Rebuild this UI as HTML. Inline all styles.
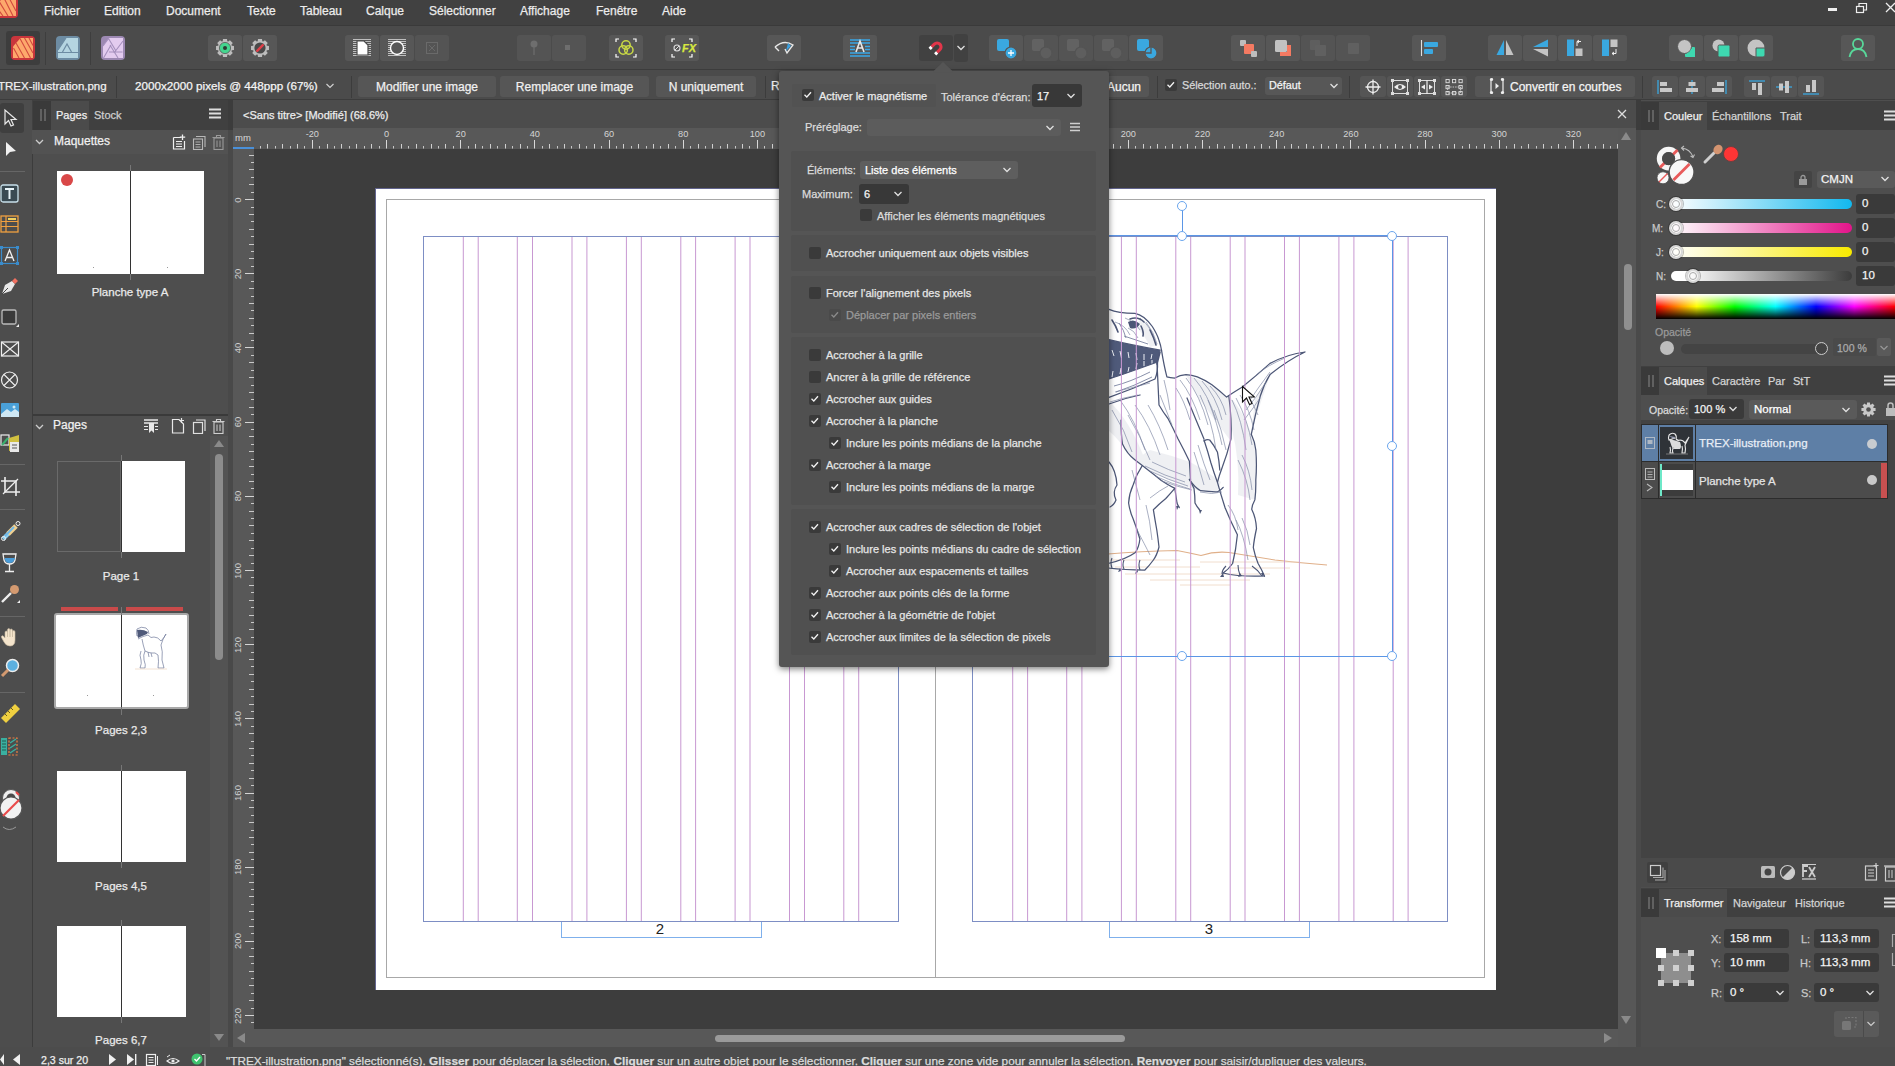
<!DOCTYPE html><html><head><meta charset="utf-8"><style>
html,body{margin:0;padding:0;width:1895px;height:1066px;overflow:hidden;background:#3a3a3a}
body{font-family:"Liberation Sans",sans-serif;position:relative;-webkit-text-stroke:0.25px currentColor}
div{position:absolute;box-sizing:border-box}
svg{position:absolute}
</style></head><body>
<div style="left:0px;top:0px;width:1895px;height:1066px;background:#3a3a3a;"></div>
<div style="left:0px;top:0px;width:1895px;height:25px;background:#414141;"></div>
<svg style="position:absolute;left:0px;top:0px;" width="18" height="18" viewBox="0 0 18 18"><rect x="-8" y="-8" width="26" height="26" rx="4" fill="#c9353c"/><path d="M-6 8L6 -6H16V16H-6Z" fill="#fda86c"/><path d="M2 -6L13 16M7 -6L16 11M-3 -2L8 16M-6 4L3 16" stroke="#d24a3e" stroke-width="1.1"/></svg>
<div style="left:44px;top:-1px;height:24px;line-height:24px;font-size:12px;color:#ececec;white-space:nowrap;">Fichier</div>
<div style="left:104px;top:-1px;height:24px;line-height:24px;font-size:12px;color:#ececec;white-space:nowrap;">Edition</div>
<div style="left:166px;top:-1px;height:24px;line-height:24px;font-size:12px;color:#ececec;white-space:nowrap;">Document</div>
<div style="left:247px;top:-1px;height:24px;line-height:24px;font-size:12px;color:#ececec;white-space:nowrap;">Texte</div>
<div style="left:300px;top:-1px;height:24px;line-height:24px;font-size:12px;color:#ececec;white-space:nowrap;">Tableau</div>
<div style="left:366px;top:-1px;height:24px;line-height:24px;font-size:12px;color:#ececec;white-space:nowrap;">Calque</div>
<div style="left:429px;top:-1px;height:24px;line-height:24px;font-size:12px;color:#ececec;white-space:nowrap;">Sélectionner</div>
<div style="left:520px;top:-1px;height:24px;line-height:24px;font-size:12px;color:#ececec;white-space:nowrap;">Affichage</div>
<div style="left:596px;top:-1px;height:24px;line-height:24px;font-size:12px;color:#ececec;white-space:nowrap;">Fenêtre</div>
<div style="left:662px;top:-1px;height:24px;line-height:24px;font-size:12px;color:#ececec;white-space:nowrap;">Aide</div>
<div style="left:1828px;top:8px;width:9px;height:3px;background:#f0f0f0;"></div>
<svg style="position:absolute;left:1855px;top:2px;" width="14" height="12" viewBox="0 0 14 12"><rect x="1.5" y="4.5" width="7" height="6" fill="none" stroke="#eee" stroke-width="1.2"/><path d="M4 4.5 V1.5 H11.5 V8 H8.5" fill="none" stroke="#eee" stroke-width="1.2"/></svg>
<svg style="position:absolute;left:1884px;top:2px;" width="11" height="11" viewBox="0 0 11 11"><path d="M2 1 L11 10 M11 1 L2 10" stroke="#eee" stroke-width="1.3"/></svg>
<div style="left:0px;top:25px;width:1895px;height:45px;background:#4b4b4b;"></div>
<div style="left:0px;top:25px;width:1895px;height:1px;background:#3a3a3a;"></div>
<div style="left:0px;top:69px;width:1895px;height:1px;background:#3c3c3c;"></div>
<div style="left:0px;top:70px;width:1895px;height:30px;background:#4b4b4b;"></div>
<div style="left:0px;top:99px;width:1895px;height:1px;background:#3c3c3c;"></div>
<div style="left:6px;top:31px;width:34px;height:34px;background:#3d3d3d;border-radius:3px"></div>
<svg style="position:absolute;left:11px;top:36px;" width="24" height="24" viewBox="0 0 24 24"><rect x="0" y="0" width="24" height="24" rx="4" fill="#c9353c"/><path d="M2 10.5L9.5 2H22V22H2Z" fill="#fda86c"/><path d="M9 2.5L19.5 22M13.5 2L22 17M18 2L22 9.5M5 7L13.5 22M2.5 12L8 22" stroke="#d24a3e" stroke-width="1.1"/></svg>
<div style="left:45px;top:32px;width:1px;height:33px;background:#3e3e3e;"></div>
<svg style="position:absolute;left:56px;top:36px;" width="24" height="24" viewBox="0 0 24 24"><rect x="0" y="0" width="24" height="24" rx="4" fill="#6d8ca3"/><path d="M10 2H22V22H2V14Z" fill="#b5d5e1"/><path d="M2 14L10 2M6.5 16L11 8L15.5 16M2 16.5H22" stroke="#6d8ca3" stroke-width="1.2" fill="none"/></svg>
<div style="left:90px;top:32px;width:1px;height:33px;background:#3e3e3e;"></div>
<svg style="position:absolute;left:101px;top:36px;" width="24" height="24" viewBox="0 0 24 24"><rect x="0" y="0" width="24" height="24" rx="4" fill="#9d89b3"/><path d="M8 2H22V22H2V10Z" fill="#e3cbef"/><path d="M2 10L8 2M7.5 2.5L15 15M22 5L13 17M21.5 16H8M17 22L9 9M2.5 22L10 9" stroke="#a590bd" stroke-width="1.1" fill="none"/></svg>
<div style="left:208px;top:35px;width:34px;height:26px;background:#575757;border-radius:3px"></div>
<div style="left:243px;top:35px;width:34px;height:26px;background:#575757;border-radius:3px"></div>
<svg style="position:absolute;left:213px;top:36px;" width="24" height="24" viewBox="0 0 24 24"><path d="M20.98 9.99 L20.98 14.01 L18.83 14.26 L18.43 15.23 L19.77 16.93 L16.93 19.77 L15.23 18.43 L14.26 18.83 L14.01 20.98 L9.99 20.98 L9.74 18.83 L8.77 18.43 L7.07 19.77 L4.23 16.93 L5.57 15.23 L5.17 14.26 L3.02 14.01 L3.02 9.99 L5.17 9.74 L5.57 8.77 L4.23 7.07 L7.07 4.23 L8.77 5.57 L9.74 5.17 L9.99 3.02 L14.01 3.02 L14.26 5.17 L15.23 5.57 L16.93 4.23 L19.77 7.07 L18.43 8.77 L18.83 9.74Z" fill="#bdbdbd"/><circle cx="12" cy="12" r="5.6" fill="#44d58e" stroke="#575757" stroke-width="0.8"/><circle cx="12" cy="12" r="2" fill="#2e3a33"/></svg>
<svg style="position:absolute;left:248px;top:36px;" width="24" height="24" viewBox="0 0 24 24"><path d="M20.98 9.99 L20.98 14.01 L18.83 14.26 L18.43 15.23 L19.77 16.93 L16.93 19.77 L15.23 18.43 L14.26 18.83 L14.01 20.98 L9.99 20.98 L9.74 18.83 L8.77 18.43 L7.07 19.77 L4.23 16.93 L5.57 15.23 L5.17 14.26 L3.02 14.01 L3.02 9.99 L5.17 9.74 L5.57 8.77 L4.23 7.07 L7.07 4.23 L8.77 5.57 L9.74 5.17 L9.99 3.02 L14.01 3.02 L14.26 5.17 L15.23 5.57 L16.93 4.23 L19.77 7.07 L18.43 8.77 L18.83 9.74Z" fill="#bdbdbd"/><circle cx="12" cy="12" r="5.6" fill="#4a4a4a"/><path d="M9.2 14.8L14.8 9.2" stroke="#e0404a" stroke-width="2.4" stroke-linecap="round"/></svg>
<div style="left:345px;top:35px;width:34px;height:26px;background:#575757;border-radius:3px"></div>
<div style="left:380px;top:35px;width:34px;height:26px;background:#575757;border-radius:3px"></div>
<div style="left:415px;top:35px;width:34px;height:26px;background:#545454;border-radius:3px"></div>
<svg style="position:absolute;left:353px;top:39px;" width="18" height="18" viewBox="0 0 18 18"><path d="M0 0.5H18" stroke="#d8d8d8" stroke-width="0.8"/><path d="M0 2.5H18" stroke="#d8d8d8" stroke-width="0.8"/><path d="M0 4.5H18" stroke="#d8d8d8" stroke-width="0.8"/><path d="M0 6.5H18" stroke="#d8d8d8" stroke-width="0.8"/><path d="M0 8.5H18" stroke="#d8d8d8" stroke-width="0.8"/><path d="M0 10.5H18" stroke="#d8d8d8" stroke-width="0.8"/><path d="M0 12.5H18" stroke="#d8d8d8" stroke-width="0.8"/><path d="M0 14.5H18" stroke="#d8d8d8" stroke-width="0.8"/><path d="M0 16.5H18" stroke="#d8d8d8" stroke-width="0.8"/><path d="M4 2H11L15 6V16H4Z" fill="#fff" stroke="#4a4a4a" stroke-width="1.2"/></svg>
<svg style="position:absolute;left:388px;top:39px;" width="18" height="18" viewBox="0 0 18 18"><path d="M0 0.5H18" stroke="#d8d8d8" stroke-width="0.8"/><path d="M0 2.5H18" stroke="#d8d8d8" stroke-width="0.8"/><path d="M0 4.5H18" stroke="#d8d8d8" stroke-width="0.8"/><path d="M0 6.5H18" stroke="#d8d8d8" stroke-width="0.8"/><path d="M0 8.5H18" stroke="#d8d8d8" stroke-width="0.8"/><path d="M0 10.5H18" stroke="#d8d8d8" stroke-width="0.8"/><path d="M0 12.5H18" stroke="#d8d8d8" stroke-width="0.8"/><path d="M0 14.5H18" stroke="#d8d8d8" stroke-width="0.8"/><path d="M0 16.5H18" stroke="#d8d8d8" stroke-width="0.8"/><circle cx="9" cy="9" r="6.5" fill="#575757" stroke="#fff" stroke-width="1.4"/></svg>
<svg style="position:absolute;left:425px;top:41px;" width="14" height="14" viewBox="0 0 14 14"><rect x="1.5" y="1.5" width="11" height="11" fill="none" stroke="#6a6a6a" stroke-width="1"/><path d="M4 4L10 10M10 4L4 10" stroke="#6a6a6a" stroke-width="1"/></svg>
<div style="left:517px;top:35px;width:34px;height:26px;background:#545454;border-radius:3px"></div>
<div style="left:552px;top:35px;width:34px;height:26px;background:#545454;border-radius:3px"></div>
<svg style="position:absolute;left:526px;top:39px;" width="16" height="18" viewBox="0 0 16 18"><circle cx="8" cy="5" r="3.5" fill="#6e6e6e"/><path d="M8 8V16" stroke="#6e6e6e" stroke-width="1.2"/></svg>
<div style="left:565px;top:45px;width:5px;height:5px;background:#6e6e6e;"></div>
<div style="left:609px;top:35px;width:34px;height:26px;background:#575757;border-radius:3px"></div>
<svg style="position:absolute;left:615px;top:38px;" width="22" height="20" viewBox="0 0 22 20"><path d="M1 4V1H4M18 1H21V4M1 16V19H4M18 19H21V16" stroke="#fff" stroke-width="1.2" fill="none"/><circle cx="11" cy="7" r="4.2" fill="none" stroke="#c8d845" stroke-width="1.5"/><circle cx="8.2" cy="12" r="4.2" fill="none" stroke="#c8d845" stroke-width="1.5"/><circle cx="13.8" cy="12" r="4.2" fill="none" stroke="#c8d845" stroke-width="1.5"/></svg>
<div style="left:665px;top:35px;width:34px;height:26px;background:#575757;border-radius:3px"></div>
<svg style="position:absolute;left:671px;top:38px;" width="22" height="20" viewBox="0 0 22 20"><path d="M1 4V1H4M18 1H21V4M1 16V19H4M18 19H21V16" stroke="#fff" stroke-width="1.2" fill="none"/><circle cx="6" cy="10" r="3" fill="none" stroke="#ddd" stroke-width="1.1"/><path d="M4 12L8 8" stroke="#ddd" stroke-width="1"/></svg>
<div style="left:682px;top:41px;font-size:11px;line-height:14px;height:14px;color:#d8e840;font-weight:bold;font-style:italic">FX</div>
<div style="left:767px;top:35px;width:34px;height:26px;background:#575757;border-radius:3px"></div>
<svg style="position:absolute;left:773px;top:38px;" width="22" height="20" viewBox="0 0 22 20"><path d="M2 9 Q11 1 20 7 L14 15 L12 11 M2 9 L6 13" stroke="#e8e8e8" stroke-width="1.4" fill="none"/><path d="M15 5 L13 13 L18 8Z" fill="#3aa0e0"/></svg>
<div style="left:843px;top:35px;width:34px;height:26px;background:#575757;border-radius:3px"></div>
<svg style="position:absolute;left:849px;top:38px;" width="22" height="20" viewBox="0 0 22 20"><path d="M1 2H21M1 5H21M1 15H21M1 18H21M1 8.5H6M16 8.5H21M1 11.5H6M16 11.5H21" stroke="#3aa8e8" stroke-width="1.3"/><path d="M7 14L11 3L15 14M8.5 10H13.5" stroke="#e8e8e8" stroke-width="1.6" fill="none"/></svg>
<div style="left:919px;top:35px;width:34px;height:26px;background:#414141;border-radius:3px"></div>
<div style="left:954px;top:34px;width:14px;height:28px;background:#414141;border-radius:3px"></div>
<svg style="position:absolute;left:926px;top:38px;" width="20" height="20" viewBox="0 0 20 20"><g transform="translate(10 10) scale(0.78) rotate(45) translate(-10 -10)"><path d="M3 13V8A7 7 0 0 1 17 8V13H13V8A3 3 0 0 0 7 8V13Z" fill="#e2364a"/><rect x="3" y="13" width="4" height="3.5" fill="#fff"/><rect x="13" y="13" width="4" height="3.5" fill="#fff"/></g></svg>
<svg style="position:absolute;left:956px;top:44px;" width="10" height="8" viewBox="0 0 10 8"><path d="M1.5 2L5 5.5L8.5 2" stroke="#e0e0e0" stroke-width="1.3" fill="none"/></svg>
<div style="left:989px;top:35px;width:34px;height:26px;background:#575757;border-radius:3px"></div>
<div style="left:1024px;top:35px;width:34px;height:26px;background:#545454;border-radius:3px"></div>
<div style="left:1059px;top:35px;width:34px;height:26px;background:#545454;border-radius:3px"></div>
<div style="left:1094px;top:35px;width:34px;height:26px;background:#545454;border-radius:3px"></div>
<div style="left:1129px;top:35px;width:34px;height:26px;background:#575757;border-radius:3px"></div>
<svg style="position:absolute;left:996px;top:38px;" width="22" height="22" viewBox="0 0 22 22"><rect x="1" y="1" width="12" height="12" rx="2" fill="#3aa8e0"/><circle cx="15" cy="15" r="6" fill="#3aa8e0" stroke="#575757" stroke-width="1.2"/><path d="M15 12V18M12 15H18" stroke="#fff" stroke-width="1.3"/></svg>
<svg style="position:absolute;left:1031px;top:38px;" width="22" height="22" viewBox="0 0 22 22"><rect x="1" y="1" width="12" height="12" rx="2" fill="#626262"/><circle cx="15" cy="15" r="6" fill="#5e5e5e" stroke="#545454" stroke-width="1.2"/></svg>
<svg style="position:absolute;left:1066px;top:38px;" width="22" height="22" viewBox="0 0 22 22"><rect x="1" y="1" width="12" height="12" rx="2" fill="#626262"/><circle cx="15" cy="15" r="6" fill="#5e5e5e" stroke="#545454" stroke-width="1.2"/></svg>
<svg style="position:absolute;left:1101px;top:38px;" width="22" height="22" viewBox="0 0 22 22"><rect x="1" y="1" width="12" height="12" rx="2" fill="#626262"/><circle cx="15" cy="15" r="6" fill="#5e5e5e" stroke="#545454" stroke-width="1.2"/></svg>
<svg style="position:absolute;left:1136px;top:38px;" width="22" height="22" viewBox="0 0 22 22"><rect x="1" y="1" width="12" height="12" rx="2" fill="#3aa8e0"/><circle cx="15" cy="15" r="6" fill="#3aa8e0" stroke="#575757" stroke-width="1.2"/><path d="M15 9V15H9" stroke="#575757" stroke-width="1.3" fill="none"/></svg>
<div style="left:1231px;top:35px;width:34px;height:26px;background:#575757;border-radius:3px"></div>
<div style="left:1266px;top:35px;width:34px;height:26px;background:#575757;border-radius:3px"></div>
<div style="left:1301px;top:35px;width:34px;height:26px;background:#545454;border-radius:3px"></div>
<div style="left:1336px;top:35px;width:34px;height:26px;background:#545454;border-radius:3px"></div>
<svg style="position:absolute;left:1239px;top:39px;" width="20" height="20" viewBox="0 0 20 20"><rect x="1" y="1" width="6" height="6" rx="1" fill="#bdbdbd"/><rect x="5" y="5" width="10" height="10" rx="1" fill="#f47a62"/><rect x="12" y="12" width="6" height="6" rx="1" fill="#bdbdbd"/></svg>
<svg style="position:absolute;left:1274px;top:39px;" width="20" height="20" viewBox="0 0 20 20"><rect x="1" y="1" width="12" height="12" rx="1.5" fill="#c2c2c2"/><path d="M13 6H17V17H6V13H13Z" fill="#f47a62"/></svg>
<svg style="position:absolute;left:1309px;top:39px;" width="20" height="20" viewBox="0 0 20 20"><rect x="1" y="1" width="10" height="10" rx="1" fill="#5e5e5e"/><rect x="6" y="6" width="11" height="11" rx="1" fill="#606060"/></svg>
<svg style="position:absolute;left:1346px;top:41px;" width="16" height="16" viewBox="0 0 16 16"><rect x="2" y="2" width="11" height="11" rx="1" fill="#606060"/></svg>
<div style="left:1412px;top:35px;width:34px;height:26px;background:#575757;border-radius:3px"></div>
<svg style="position:absolute;left:1419px;top:38px;" width="22" height="20" viewBox="0 0 22 20"><path d="M2.5 2V18" stroke="#e0e0e0" stroke-width="1.1"/><rect x="5" y="4" width="14" height="5" rx="1" fill="#3aa8e0"/><rect x="5" y="11" width="9" height="5" rx="1" fill="#3aa8e0"/></svg>
<div style="left:1488px;top:35px;width:34px;height:26px;background:#575757;border-radius:3px"></div>
<div style="left:1523px;top:35px;width:34px;height:26px;background:#575757;border-radius:3px"></div>
<div style="left:1558px;top:35px;width:34px;height:26px;background:#575757;border-radius:3px"></div>
<div style="left:1593px;top:35px;width:34px;height:26px;background:#575757;border-radius:3px"></div>
<svg style="position:absolute;left:1495px;top:38px;" width="20" height="20" viewBox="0 0 20 20"><path d="M9 2L1.5 17H9Z" fill="#3aa8e0"/><path d="M11 2L18.5 17H11Z" fill="#c4c4c4"/></svg>
<svg style="position:absolute;left:1530px;top:38px;" width="20" height="20" viewBox="0 0 20 20"><path d="M18 1.5L3 9H18Z" fill="#3aa8e0"/><path d="M18 11L3 11L18 18.5Z" fill="#c4c4c4"/></svg>
<svg style="position:absolute;left:1565px;top:38px;" width="20" height="20" viewBox="0 0 20 20"><rect x="2" y="1.5" width="7" height="16.5" fill="#3aa8e0"/><rect x="10.5" y="10.5" width="7" height="7.5" fill="#c4c4c4"/><path d="M12 8V3.5H16M14 2L12 3.5L14 5" stroke="#eee" stroke-width="1" fill="none"/></svg>
<svg style="position:absolute;left:1600px;top:38px;" width="20" height="20" viewBox="0 0 20 20"><rect x="2" y="1.5" width="7" height="16.5" fill="#3aa8e0"/><rect x="10.5" y="1.5" width="7" height="7.5" fill="#c4c4c4"/><path d="M16 11V15.5H12M14 14L12 15.5L14 17" stroke="#eee" stroke-width="1" fill="none"/></svg>
<div style="left:1669px;top:35px;width:34px;height:26px;background:#575757;border-radius:3px"></div>
<div style="left:1704px;top:35px;width:34px;height:26px;background:#575757;border-radius:3px"></div>
<div style="left:1739px;top:35px;width:34px;height:26px;background:#575757;border-radius:3px"></div>
<svg style="position:absolute;left:1676px;top:38px;" width="22" height="22" viewBox="0 0 22 22"><rect x="9" y="9" width="10" height="10" rx="1" fill="#3ed8b0"/><circle cx="8.5" cy="8.5" r="7" fill="#c4c4c4" stroke="#575757" stroke-width="1"/><path d="M13 15.5 H19 V9" stroke="#3ed8b0" stroke-width="0" fill="none"/><path d="M15.3 11 A7 7 0 0 1 11 15.3 L11 19 L19 19 L19 11 Z" fill="#3ed8b0"/></svg>
<svg style="position:absolute;left:1711px;top:38px;" width="22" height="22" viewBox="0 0 22 22"><circle cx="7.5" cy="7.5" r="6" fill="#c4c4c4"/><rect x="7" y="7" width="12" height="12" rx="1.5" fill="#3ed8b0" stroke="#575757" stroke-width="1"/></svg>
<svg style="position:absolute;left:1746px;top:38px;" width="22" height="22" viewBox="0 0 22 22"><circle cx="10" cy="10" r="8.5" fill="#c4c4c4"/><path d="M10 19V10H19V17Q19 19 17 19Z" fill="#3ed8b0" stroke="#575757" stroke-width="1"/></svg>
<div style="left:1841px;top:35px;width:34px;height:26px;background:#575757;border-radius:3px"></div>
<svg style="position:absolute;left:1848px;top:37px;" width="20" height="22" viewBox="0 0 20 22"><circle cx="10" cy="7" r="5" fill="none" stroke="#58d89a" stroke-width="1.8"/><path d="M1.5 20 Q3 12 10 12 Q17 12 18.5 20" fill="none" stroke="#58d89a" stroke-width="1.8"/></svg>
<div style="left:-2px;top:74.5px;height:23.0px;line-height:23.0px;font-size:11.5px;color:#f0f0f0;white-space:nowrap;">TREX-illustration.png</div>
<div style="left:116px;top:76px;width:1px;height:22px;background:#3c3c3c;"></div>
<div style="left:135px;top:74.3px;height:23.4px;line-height:23.4px;font-size:11.7px;color:#f4f4f4;white-space:nowrap;">2000x2000 pixels @ 448ppp (67%)</div>
<svg style="position:absolute;left:325px;top:82px;" width="10" height="8" viewBox="0 0 10 8"><path d="M1.5 2L5 5.5L8.5 2" stroke="#d0d0d0" stroke-width="1.2" fill="none"/></svg>
<div style="left:351px;top:76px;width:1px;height:22px;background:#3c3c3c;"></div>
<div style="left:358px;top:76px;width:138px;height:21px;background:#565656;border-radius:3px"></div>
<div style="left:127.0px;width:600px;text-align:center;top:74.5px;height:24px;line-height:24px;font-size:12px;color:#f0f0f0;white-space:nowrap;">Modifier une image</div>
<div style="left:500px;top:76px;width:149px;height:21px;background:#565656;border-radius:3px"></div>
<div style="left:274.5px;width:600px;text-align:center;top:74.5px;height:24px;line-height:24px;font-size:12px;color:#f0f0f0;white-space:nowrap;">Remplacer une image</div>
<div style="left:656px;top:76px;width:100px;height:21px;background:#565656;border-radius:3px"></div>
<div style="left:406.0px;width:600px;text-align:center;top:74.5px;height:24px;line-height:24px;font-size:12px;color:#f0f0f0;white-space:nowrap;">N uniquement</div>
<div style="left:765px;top:76px;width:1px;height:22px;background:#3c3c3c;"></div>
<div style="left:771px;top:74px;height:24px;line-height:24px;font-size:12px;color:#f0f0f0;white-space:nowrap;">R</div>
<div style="left:1095px;top:76px;width:54px;height:21px;background:#565656;border-radius:3px"></div>
<div style="left:1107px;top:74.5px;height:24px;line-height:24px;font-size:12px;color:#f4f4f4;white-space:nowrap;">Aucun</div>
<div style="left:1157px;top:76px;width:1px;height:22px;background:#3c3c3c;"></div>
<div style="left:1165px;top:79px;width:12px;height:12px;background:#3a3a3a;border-radius:2px"></div>
<svg style="position:absolute;left:1165px;top:79px;" width="12" height="12" viewBox="0 0 12 12"><path d="M2.5 5.8L4.8 8L9 3.2" stroke="#f2f2f2" stroke-width="1.3" fill="none"/></svg>
<div style="left:1182px;top:75.2px;height:21.6px;line-height:21.6px;font-size:10.8px;color:#d8d8d8;white-space:nowrap;">Sélection auto.:</div>
<div style="left:1265px;top:77px;width:77px;height:18px;background:#575757;border-radius:3px"></div>
<div style="left:1269px;top:75.2px;height:21.6px;line-height:21.6px;font-size:10.8px;color:#f4f4f4;white-space:nowrap;">Défaut</div>
<svg style="position:absolute;left:1329px;top:82px;" width="10" height="8" viewBox="0 0 10 8"><path d="M1.5 2L5 5.5L8.5 2" stroke="#e0e0e0" stroke-width="1.3" fill="none"/></svg>
<div style="left:1349px;top:76px;width:1px;height:22px;background:#3c3c3c;"></div>
<div style="left:1360px;top:76px;width:26px;height:21px;background:#555;border-radius:3px"></div>
<div style="left:1387px;top:76px;width:26px;height:21px;background:#555;border-radius:3px"></div>
<div style="left:1414px;top:76px;width:26px;height:21px;background:#555;border-radius:3px"></div>
<div style="left:1441px;top:76px;width:26px;height:21px;background:#555;border-radius:3px"></div>
<svg style="position:absolute;left:1363px;top:78px;" width="20" height="18" viewBox="0 0 20 18"><circle cx="10" cy="9" r="5.5" fill="none" stroke="#eee" stroke-width="1.3"/><path d="M10 1.5V16.5M2.5 9H17.5" stroke="#eee" stroke-width="1.3"/></svg>
<svg style="position:absolute;left:1390px;top:78px;" width="20" height="18" viewBox="0 0 20 18"><rect x="2.5" y="2.5" width="15" height="13" fill="none" stroke="#ddd" stroke-width="1"/><path d="M4 9Q10 3 16 9Q10 15 4 9Z" fill="#eee"/><circle cx="10" cy="9" r="2" fill="#555"/><rect x="1.0" y="1.0" width="3" height="3" fill="#ddd"/><rect x="1.0" y="14.0" width="3" height="3" fill="#ddd"/><rect x="16.0" y="1.0" width="3" height="3" fill="#ddd"/><rect x="16.0" y="14.0" width="3" height="3" fill="#ddd"/></svg>
<svg style="position:absolute;left:1417px;top:78px;" width="20" height="18" viewBox="0 0 20 18"><rect x="2.5" y="2.5" width="15" height="13" fill="none" stroke="#ddd" stroke-width="1"/><path d="M10 2V16" stroke="#eee" stroke-width="1.2"/><path d="M4 9L8 6.5V11.5Z M16 9L12 6.5V11.5Z" fill="#eee"/><rect x="1.0" y="1.0" width="3" height="3" fill="#ddd"/><rect x="1.0" y="14.0" width="3" height="3" fill="#ddd"/><rect x="16.0" y="1.0" width="3" height="3" fill="#ddd"/><rect x="16.0" y="14.0" width="3" height="3" fill="#ddd"/></svg>
<svg style="position:absolute;left:1444px;top:78px;" width="20" height="18" viewBox="0 0 20 18"><rect x="2" y="1.5" width="3.2" height="3.2" fill="none" stroke="#ddd" stroke-width="0.9"/><rect x="2" y="7.5" width="3.2" height="3.2" fill="none" stroke="#ddd" stroke-width="0.9"/><rect x="2" y="13.5" width="3.2" height="3.2" fill="none" stroke="#ddd" stroke-width="0.9"/><rect x="8.5" y="1.5" width="3.2" height="3.2" fill="none" stroke="#ddd" stroke-width="0.9"/><rect x="8.5" y="13.5" width="3.2" height="3.2" fill="none" stroke="#ddd" stroke-width="0.9"/><rect x="15" y="1.5" width="3.2" height="3.2" fill="none" stroke="#ddd" stroke-width="0.9"/><rect x="15" y="7.5" width="3.2" height="3.2" fill="none" stroke="#ddd" stroke-width="0.9"/><rect x="15" y="13.5" width="3.2" height="3.2" fill="none" stroke="#ddd" stroke-width="0.9"/><rect x="3.6" y="9" width="13" height="6" fill="none" stroke="#ddd" stroke-width="0.8" stroke-dasharray="1.5 1"/></svg>
<div style="left:1475px;top:76px;width:160px;height:21px;background:#565656;border-radius:3px"></div>
<svg style="position:absolute;left:1489px;top:77px;" width="16" height="18" viewBox="0 0 16 18"><path d="M4 2H2V16H4M12 2H14V16H12" stroke="#eee" stroke-width="1.2" fill="none"/><circle cx="2.5" cy="2.5" r="1.6" fill="#eee"/><circle cx="13.5" cy="2.5" r="1.6" fill="#eee"/><circle cx="2.5" cy="15.5" r="1.6" fill="#eee"/><circle cx="13.5" cy="15.5" r="1.6" fill="#eee"/><path d="M6.5 6L10 9L6.5 12Z" fill="#eee"/></svg>
<div style="left:1510px;top:74.5px;height:24px;line-height:24px;font-size:12px;color:#f4f4f4;white-space:nowrap;">Convertir en courbes</div>
<div style="left:1642px;top:76px;width:1px;height:22px;background:#3c3c3c;"></div>
<div style="left:1652px;top:76px;width:26px;height:21px;background:#555;border-radius:3px"></div>
<div style="left:1679px;top:76px;width:26px;height:21px;background:#555;border-radius:3px"></div>
<div style="left:1706px;top:76px;width:26px;height:21px;background:#555;border-radius:3px"></div>
<div style="left:1744px;top:76px;width:26px;height:21px;background:#555;border-radius:3px"></div>
<div style="left:1771px;top:76px;width:26px;height:21px;background:#555;border-radius:3px"></div>
<div style="left:1798px;top:76px;width:26px;height:21px;background:#555;border-radius:3px"></div>
<svg style="position:absolute;left:1655px;top:78px;" width="20" height="18" viewBox="0 0 20 18"><path d="M3 2V16" stroke="#3aa8e0" stroke-width="1.3"/><rect x="5" y="4" width="7" height="4" fill="#c8c8c8"/><rect x="5" y="10" width="12" height="4" fill="#c8c8c8"/></svg>
<svg style="position:absolute;left:1682px;top:78px;" width="20" height="18" viewBox="0 0 20 18"><path d="M10 2V16" stroke="#3aa8e0" stroke-width="1.3"/><rect x="6.5" y="4" width="7" height="4" fill="#c8c8c8"/><rect x="4" y="10" width="12" height="4" fill="#c8c8c8"/></svg>
<svg style="position:absolute;left:1709px;top:78px;" width="20" height="18" viewBox="0 0 20 18"><path d="M17 2V16" stroke="#3aa8e0" stroke-width="1.3"/><rect x="8" y="4" width="7" height="4" fill="#c8c8c8"/><rect x="3" y="10" width="12" height="4" fill="#c8c8c8"/></svg>
<svg style="position:absolute;left:1747px;top:78px;" width="20" height="18" viewBox="0 0 20 18"><path d="M2 3H18" stroke="#3aa8e0" stroke-width="1.3"/><rect x="5" y="5" width="4" height="7" fill="#c8c8c8"/><rect x="11" y="5" width="4" height="12" fill="#c8c8c8"/></svg>
<svg style="position:absolute;left:1774px;top:78px;" width="20" height="18" viewBox="0 0 20 18"><path d="M2 9H18" stroke="#3aa8e0" stroke-width="1.3"/><rect x="5" y="5.5" width="4" height="7" fill="#c8c8c8"/><rect x="11" y="3" width="4" height="12" fill="#c8c8c8"/></svg>
<svg style="position:absolute;left:1801px;top:78px;" width="20" height="18" viewBox="0 0 20 18"><path d="M2 16H18" stroke="#3aa8e0" stroke-width="1.3"/><rect x="5" y="7" width="4" height="7" fill="#c8c8c8"/><rect x="11" y="2" width="4" height="12" fill="#c8c8c8"/></svg>
<div style="left:0px;top:100px;width:32px;height:947px;background:#4d4d4d;"></div>
<div style="left:32px;top:100px;width:1px;height:947px;background:#3c3c3c;"></div>
<div style="left:0px;top:103px;width:24px;height:30px;background:#3f3f3f;border-radius:3px"></div>
<div style="left:33px;top:100px;width:195px;height:947px;background:#4e4e4e;"></div>
<div style="left:32px;top:100px;width:196px;height:30px;background:#404040;"></div>
<div style="left:51px;top:101px;width:38px;height:29px;background:#4b4b4b;"></div>
<div style="left:33px;top:101px;width:18px;height:29px;background:#3a3a3a;"></div>
<svg style="position:absolute;left:38px;top:108px;" width="10" height="14" viewBox="0 0 10 14"><path d="M3 1V13M7 1V13" stroke="#888" stroke-width="1"/></svg>
<div style="left:56px;top:104px;height:22px;line-height:22px;font-size:11px;color:#f0f0f0;white-space:nowrap;">Pages</div>
<div style="left:94px;top:104px;height:22px;line-height:22px;font-size:11px;color:#cfcfcf;white-space:nowrap;">Stock</div>
<svg style="position:absolute;left:209px;top:108px;" width="12" height="11" viewBox="0 0 12 11"><path d="M0 1.5H12M0 5.5H12M0 9.5H12" stroke="#ddd" stroke-width="2"/></svg>
<div style="left:32px;top:130px;width:196px;height:24px;background:#525252;"></div>
<svg style="position:absolute;left:35px;top:138px;" width="9" height="8" viewBox="0 0 9 8"><path d="M1 2L4.5 5.5L8 2" stroke="#ccc" stroke-width="1.3" fill="none"/></svg>
<div style="left:54px;top:129px;height:24px;line-height:24px;font-size:12px;color:#f0f0f0;white-space:nowrap;">Maquettes</div>
<svg style="position:absolute;left:172px;top:134px;" width="14" height="16" viewBox="0 0 14 16"><path d="M1.5 3.5H9M1.5 3.5V15H12.5V7" stroke="#f0f0f0" stroke-width="1.2" fill="none"/><path d="M4 7.5H10M4 10H10M4 12.5H10" stroke="#f0f0f0" stroke-width="1"/><path d="M10.5 0.5V6M7.8 3.2H13.2" stroke="#f0f0f0" stroke-width="1.3"/></svg>
<svg style="position:absolute;left:192px;top:134px;" width="14" height="16" viewBox="0 0 14 16"><rect x="1.5" y="5" width="9" height="10.5" fill="none" stroke="#b8b8b8" stroke-width="1.1"/><path d="M4 2.5H13V13" stroke="#b8b8b8" stroke-width="1.1" fill="none"/><path d="M3.5 8H8.5M3.5 10.5H8.5M3.5 13H8.5" stroke="#b8b8b8" stroke-width="0.9"/></svg>
<svg style="position:absolute;left:212px;top:134px;" width="13" height="16" viewBox="0 0 13 16"><path d="M0.5 3.5H12.5M4.5 3.5V1.5H8.5V3.5" stroke="#9a9a9a" stroke-width="1.1" fill="none"/><rect x="2" y="4" width="9" height="11.5" fill="none" stroke="#9a9a9a" stroke-width="1.1"/><path d="M5 6.5V13M8 6.5V13" stroke="#9a9a9a" stroke-width="1"/></svg>
<div style="left:57px;top:171px;width:147px;height:103px;background:#fff;"></div>
<div style="left:130px;top:165px;width:1px;height:115px;background:#777;"></div>
<div style="left:130px;top:171px;width:1px;height:103px;background:#333;"></div>
<div style="left:61px;top:174px;width:12px;height:12px;border-radius:50%;background:#d94848"></div>
<div style="left:-170px;width:600px;text-align:center;top:280.5px;height:23.0px;line-height:23.0px;font-size:11.5px;color:#eaeaea;white-space:nowrap;">Planche type A</div>
<div style="left:93px;top:267px;width:1px;height:1px;background:#999;"></div>
<div style="left:167px;top:267px;width:1px;height:1px;background:#999;"></div>
<div style="left:33px;top:414px;width:195px;height:2px;background:#3a3a3a;"></div>
<svg style="position:absolute;left:35px;top:423px;" width="9" height="8" viewBox="0 0 9 8"><path d="M1 2L4.5 5.5L8 2" stroke="#ccc" stroke-width="1.3" fill="none"/></svg>
<div style="left:53px;top:413px;height:24px;line-height:24px;font-size:12px;color:#f0f0f0;white-space:nowrap;">Pages</div>
<svg style="position:absolute;left:143px;top:418px;" width="16" height="16" viewBox="0 0 16 16"><path d="M1 2H15M1 5H15" stroke="#e8e8e8" stroke-width="1.4"/><path d="M6 5V15L8.5 12.5L11 15V5" fill="#e8e8e8"/><path d="M1 8.5H5M1 11.5H5M12 8.5H15M12 11.5H15" stroke="#e8e8e8" stroke-width="1.2"/></svg>
<svg style="position:absolute;left:171px;top:418px;" width="14" height="16" viewBox="0 0 14 16"><path d="M1.5 1.5H8L12.5 6V15H1.5Z" fill="none" stroke="#e8e8e8" stroke-width="1.2"/><path d="M10.5 0V5M8 2.5H13" stroke="#e8e8e8" stroke-width="1.2"/></svg>
<svg style="position:absolute;left:192px;top:418px;" width="14" height="16" viewBox="0 0 14 16"><rect x="1.5" y="4.5" width="9" height="11" fill="none" stroke="#e0e0e0" stroke-width="1.2"/><path d="M4 2H13V13" stroke="#e0e0e0" stroke-width="1.2" fill="none"/></svg>
<svg style="position:absolute;left:212px;top:418px;" width="13" height="16" viewBox="0 0 13 16"><path d="M0.5 3.5H12.5M4.5 3.5V1.5H8.5V3.5" stroke="#cfcfcf" stroke-width="1.1" fill="none"/><rect x="2" y="4" width="9" height="11.5" fill="none" stroke="#cfcfcf" stroke-width="1.1"/><path d="M5 6.5V13M8 6.5V13" stroke="#cfcfcf" stroke-width="1"/></svg>
<div style="left:210px;top:436px;width:18px;height:611px;background:#535353;"></div>
<div style="left:215px;top:454px;width:8px;height:206px;background:#8c8c8c;border-radius:4px"></div>
<svg style="position:absolute;left:213px;top:439px;" width="12" height="9" viewBox="0 0 12 9"><path d="M1 8L6 1L11 8Z" fill="#8a8a8a"/></svg>
<svg style="position:absolute;left:213px;top:1033px;" width="12" height="9" viewBox="0 0 12 9"><path d="M1 1L6 8L11 1Z" fill="#8a8a8a"/></svg>
<div style="left:57px;top:461px;width:64px;height:91px;background:transparent;border:1px solid #6a6a6a"></div>
<div style="left:121px;top:461px;width:64px;height:91px;background:#fff;"></div>
<div style="left:121px;top:455px;width:1px;height:103px;background:#777;"></div>
<div style="left:121px;top:461px;width:1px;height:91px;background:#333;"></div>
<div style="left:-179px;width:600px;text-align:center;top:564.5px;height:23.0px;line-height:23.0px;font-size:11.5px;color:#eaeaea;white-space:nowrap;">Page 1</div>
<div style="left:61px;top:607px;width:57px;height:4px;background:#c94a4a;"></div>
<div style="left:126px;top:607px;width:57px;height:4px;background:#c94a4a;"></div>
<div style="left:54px;top:613px;width:135px;height:96px;background:#fff;border:2px solid #a8a8a8;border-radius:3px"></div>
<div style="left:121px;top:607px;width:1px;height:108px;background:#777;"></div>
<div style="left:121px;top:615px;width:1px;height:92px;background:#333;"></div>
<div style="left:-179px;width:600px;text-align:center;top:718.5px;height:23.0px;line-height:23.0px;font-size:11.5px;color:#eaeaea;white-space:nowrap;">Pages 2,3</div>
<svg style="position:absolute;left:121px;top:615px;" width="65" height="91" viewBox="0 0 65 91"><g fill="none" stroke="#6f789a" stroke-width="0.7"><path d="M16 14 Q20 11 25 13 Q28 15 28 19 M16 14 Q15 18 16 21 Q20 20 24 18 M17 24 Q22 21 27 20"/><path d="M27 20 Q30 24 33 22 Q37 22 40 26 Q43 23 45 19 Q42 23 40 30 Q42 36 41 45 Q42 49 43 53 L37 53 Q38 46 37 40 Q34 37 31 38"/><path d="M21 24 Q22 30 24 36 Q22 40 23 45 Q25 50 24 53 L19 53 Q21 48 20 45 Q18 40 20 36 M24 36 Q28 38 31 38 M27 37 L28 42 M30 38 L31 42"/></g><path d="M16 15 Q22 14 27 17 L26 19 Q21 21 17 23 Z" fill="#4f5a7a"/><path d="M14 54 H46" stroke="#efd9c6" stroke-width="0.8"/></svg>
<div style="left:87px;top:695px;width:1px;height:1px;background:#999;"></div>
<div style="left:153px;top:695px;width:1px;height:1px;background:#999;"></div>
<div style="left:57px;top:771px;width:129px;height:91px;background:#fff;"></div>
<div style="left:121px;top:765px;width:1px;height:103px;background:#777;"></div>
<div style="left:121px;top:771px;width:1px;height:91px;background:#333;"></div>
<div style="left:-179px;width:600px;text-align:center;top:874.5px;height:23.0px;line-height:23.0px;font-size:11.5px;color:#eaeaea;white-space:nowrap;">Pages 4,5</div>
<div style="left:57px;top:926px;width:129px;height:91px;background:#fff;"></div>
<div style="left:121px;top:920px;width:1px;height:103px;background:#777;"></div>
<div style="left:121px;top:926px;width:1px;height:91px;background:#333;"></div>
<div style="left:-179px;width:600px;text-align:center;top:1028.5px;height:23.0px;line-height:23.0px;font-size:11.5px;color:#eaeaea;white-space:nowrap;">Pages 6,7</div>
<div style="left:228px;top:130px;width:5px;height:917px;background:#494949;"></div>
<div style="left:228px;top:100px;width:5px;height:30px;background:#3c3c3c;"></div>
<svg style="position:absolute;left:2px;top:108px;" width="18" height="20" viewBox="0 0 18 20"><path d="M3 2L3 16L6.5 12.5L9 18L11.5 17L9 11.5L14 11.5Z" fill="#3f3f3f" stroke="#e8e8e8" stroke-width="1.2"/></svg>
<svg style="position:absolute;left:2px;top:140px;" width="18" height="18" viewBox="0 0 18 18"><path d="M4 2L4 16L8 12L14 11Z" fill="#f0f0f0"/></svg>
<div style="left:0px;top:171px;width:25px;height:1px;background:#666;"></div>
<svg style="position:absolute;left:0px;top:184px;" width="20" height="20" viewBox="0 0 20 20"><rect x="1" y="1" width="17" height="17" rx="2" fill="#3a4a52" stroke="#c8e0ea" stroke-width="1.3"/><path d="M5 5H14M9.5 5V15" stroke="#e8f4f8" stroke-width="2"/></svg>
<svg style="position:absolute;left:0px;top:214px;" width="20" height="20" viewBox="0 0 20 20"><rect x="1" y="2" width="17" height="16" fill="none" stroke="#f0a040" stroke-width="1.3"/><path d="M1 7.5H18M1 12.5H18M6 2V18" stroke="#f0a040" stroke-width="1.2"/><rect x="8" y="4" width="8" height="2" fill="#f0d060"/></svg>
<svg style="position:absolute;left:0px;top:246px;" width="20" height="20" viewBox="0 0 20 20"><rect x="1.5" y="1.5" width="16" height="16" fill="none" stroke="#3a8ccc" stroke-width="1.2"/><path d="M5 15L9.5 4L14 15M6.5 11.5H12.5" stroke="#f0f0f0" stroke-width="1.3" fill="none"/><rect x="0.0" y="0.0" width="3" height="3" fill="#3a8ccc"/><rect x="0.0" y="16.0" width="3" height="3" fill="#3a8ccc"/><rect x="16.0" y="0.0" width="3" height="3" fill="#3a8ccc"/><rect x="16.0" y="16.0" width="3" height="3" fill="#3a8ccc"/></svg>
<svg style="position:absolute;left:0px;top:276px;" width="20" height="20" viewBox="0 0 20 20"><path d="M2 18L5 9L12 5L15 8L11 15Z" fill="#e8e8e8"/><path d="M2 18L8 12" stroke="#444" stroke-width="1"/><path d="M12 5L15 2L18 5L15 8Z" fill="#f07060"/></svg>
<svg style="position:absolute;left:0px;top:308px;" width="20" height="20" viewBox="0 0 20 20"><rect x="2" y="2" width="14" height="14" rx="1.5" fill="#3a3a3a" stroke="#bbb" stroke-width="1.3"/><path d="M19 16V19H16Z" fill="#eee"/></svg>
<svg style="position:absolute;left:0px;top:340px;" width="20" height="18" viewBox="0 0 20 18"><rect x="1.5" y="2" width="17" height="14" fill="none" stroke="#eee" stroke-width="1.2"/><path d="M1.5 2L18.5 16M18.5 2L1.5 16" stroke="#eee" stroke-width="1.1"/></svg>
<svg style="position:absolute;left:0px;top:370px;" width="20" height="20" viewBox="0 0 20 20"><circle cx="9.5" cy="10" r="8" fill="none" stroke="#eee" stroke-width="1.2"/><path d="M4 4.5L15 15.5M15 4.5L4 15.5" stroke="#eee" stroke-width="1.1"/></svg>
<svg style="position:absolute;left:0px;top:402px;" width="20" height="16" viewBox="0 0 20 16"><rect x="1" y="1" width="18" height="14" rx="1" fill="#4aa0d8"/><path d="M1 12L7 7L11 10L15 7L19 10V15H1Z" fill="#cfe8f4"/><circle cx="14" cy="5" r="1.5" fill="#cfe8f4"/></svg>
<svg style="position:absolute;left:0px;top:433px;" width="22" height="20" viewBox="0 0 22 20"><rect x="1" y="2" width="8" height="10" fill="none" stroke="#eee" stroke-width="1.2"/><path d="M9 5L19 2V16L9 18Z" fill="#d0c040"/><rect x="10" y="9" width="9" height="10" fill="#e8e8e8"/><path d="M2 12L8 5" stroke="#3ab070" stroke-width="2"/><path d="M12 12H17M12 15H17" stroke="#555" stroke-width="1"/></svg>
<div style="left:0px;top:464px;width:25px;height:1px;background:#666;"></div>
<svg style="position:absolute;left:0px;top:476px;" width="22" height="22" viewBox="0 0 22 22"><path d="M5 1V16H20M1 5H16V20" stroke="#eee" stroke-width="1.6" fill="none"/><path d="M3 18L18 3" stroke="#eee" stroke-width="1.2"/></svg>
<div style="left:0px;top:509px;width:25px;height:1px;background:#666;"></div>
<svg style="position:absolute;left:0px;top:520px;" width="22" height="22" viewBox="0 0 22 22"><path d="M3 19L9 13" stroke="#8fd0f0" stroke-width="4"/><path d="M8 14L16 6" stroke="#f0d090" stroke-width="5"/><path d="M5 16L14 7" stroke="#6fb8e8" stroke-width="2"/><circle cx="18" cy="3.5" r="2" fill="none" stroke="#eee" stroke-width="1"/><circle cx="3.5" cy="18.5" r="2" fill="none" stroke="#eee" stroke-width="1"/></svg>
<svg style="position:absolute;left:0px;top:552px;" width="20" height="22" viewBox="0 0 20 22"><path d="M3 2H16L15 8Q14 12 9.5 12Q5 12 4 8Z" fill="none" stroke="#eee" stroke-width="1.3"/><path d="M4.5 6H15Q14 11 9.5 11Q5 11 4.5 6Z" fill="#4a9cd8"/><path d="M9.5 12V19M5 19.5H14" stroke="#eee" stroke-width="1.3"/></svg>
<svg style="position:absolute;left:0px;top:583px;" width="22" height="22" viewBox="0 0 22 22"><path d="M2 19L11 10" stroke="#eee" stroke-width="2.4"/><circle cx="14.5" cy="6.5" r="4.5" fill="#d49a70"/><path d="M20 17V20H17Z" fill="#eee"/></svg>
<div style="left:0px;top:616px;width:25px;height:1px;background:#666;"></div>
<svg style="position:absolute;left:0px;top:627px;" width="22" height="22" viewBox="0 0 22 22"><path d="M5 11V5.5Q5 4 6.3 4Q7.5 4 7.5 5.5V10V3Q7.5 1.5 8.8 1.5Q10 1.5 10 3V10V3.5Q10 2 11.3 2Q12.5 2 12.5 3.5V10V5Q12.5 3.5 13.8 3.5Q15 3.5 15 5V13Q15 19 10 19Q6 19 4 15L1.5 10.5Q1 9 2.3 8.7Q3.3 8.5 4 10Z" fill="#f4e4cc" stroke="#c8b8a0" stroke-width="0.6"/></svg>
<svg style="position:absolute;left:0px;top:657px;" width="22" height="22" viewBox="0 0 22 22"><circle cx="12.5" cy="8.5" r="6" fill="#5cb0e0" stroke="#eee" stroke-width="1.5"/><path d="M8 13L2 19" stroke="#d49a70" stroke-width="3"/></svg>
<div style="left:0px;top:692px;width:25px;height:1px;background:#666;"></div>
<svg style="position:absolute;left:0px;top:703px;" width="22" height="22" viewBox="0 0 22 22"><path d="M1 15L15 1L20 6L6 20Z" fill="#f0d040"/><path d="M5 11L7 13M8 8L10 10M11 5L13 7" stroke="#6a5a20" stroke-width="1"/></svg>
<svg style="position:absolute;left:0px;top:735px;" width="22" height="22" viewBox="0 0 22 22"><rect x="1" y="3" width="6" height="17" fill="#3ab0a0"/><rect x="9" y="3" width="8" height="17" fill="none" stroke="#f08040" stroke-width="1.2" stroke-dasharray="2 1.5"/><path d="M2 6H6M2 9H6M2 12H6M2 15H6" stroke="#1e5a50" stroke-width="1"/><path d="M10 8L16 4M10 13L16 9M10 18L16 14" stroke="#3ab0a0" stroke-width="1.5"/></svg>
<svg style="position:absolute;left:0px;top:786px;" width="26" height="50" viewBox="0 0 26 50"><circle cx="11" cy="12" r="8.5" fill="#eee" stroke="#555" stroke-width="1"/><circle cx="11" cy="12" r="4.5" fill="#4a4a4a"/><path d="M16 6L19 9" stroke="#e84a4a" stroke-width="2"/>
      <circle cx="11" cy="22" r="11" fill="#f2f2f2" stroke="#555" stroke-width="1.2"/><path d="M3 30L19 14" stroke="#e84a4a" stroke-width="2.2"/>
      <path d="M3 41 Q9 46 16 41" stroke="#999" stroke-width="1" fill="none"/></svg>
<div style="left:233px;top:100px;width:1403px;height:28px;background:#4c4c4c;"></div>
<div style="left:243px;top:104px;height:22px;line-height:22px;font-size:11px;color:#ececec;white-space:nowrap;">&lt;Sans titre&gt; [Modifié] (68.6%)</div>
<svg style="position:absolute;left:1617px;top:109px;" width="10" height="10" viewBox="0 0 10 10"><path d="M1 1L9 9M9 1L1 9" stroke="#ddd" stroke-width="1.3"/></svg>
<div style="left:233px;top:128px;width:1385px;height:21px;background:#585858;"></div>
<div style="left:233px;top:128px;width:21px;height:901px;background:#585858;"></div>
<div style="left:233px;top:147px;width:21px;height:2px;background:#4a90d9;"></div>
<div style="left:235px;top:127.5px;height:19.0px;line-height:19.0px;font-size:9.5px;color:#d8d8d8;white-space:nowrap;-webkit-text-stroke:0">mm</div>
<div style="left:254px;top:149px;width:1364px;height:880px;background:#3d3d3d;"></div>
<svg style="position:absolute;left:253px;top:128px;" width="1365" height="21" viewBox="0 0 1365 21"><rect x="-1" y="16" width="1" height="4.5" fill="#d0d0d0"/><rect x="7" y="18" width="1" height="2.5" fill="#c8c8c8"/><rect x="14" y="16" width="1" height="4.5" fill="#d0d0d0"/><rect x="22" y="18" width="1" height="2.5" fill="#c8c8c8"/><rect x="29" y="16" width="1" height="4.5" fill="#d0d0d0"/><rect x="37" y="18" width="1" height="2.5" fill="#c8c8c8"/><rect x="44" y="16" width="1" height="4.5" fill="#d0d0d0"/><rect x="51" y="18" width="1" height="2.5" fill="#c8c8c8"/><rect x="59" y="12" width="1" height="8.5" fill="#d8d8d8"/><rect x="66" y="18" width="1" height="2.5" fill="#c8c8c8"/><rect x="74" y="16" width="1" height="4.5" fill="#d0d0d0"/><rect x="81" y="18" width="1" height="2.5" fill="#c8c8c8"/><rect x="88" y="16" width="1" height="4.5" fill="#d0d0d0"/><rect x="96" y="18" width="1" height="2.5" fill="#c8c8c8"/><rect x="103" y="16" width="1" height="4.5" fill="#d0d0d0"/><rect x="111" y="18" width="1" height="2.5" fill="#c8c8c8"/><rect x="118" y="16" width="1" height="4.5" fill="#d0d0d0"/><rect x="126" y="18" width="1" height="2.5" fill="#c8c8c8"/><rect x="133" y="12" width="1" height="8.5" fill="#d8d8d8"/><rect x="140" y="18" width="1" height="2.5" fill="#c8c8c8"/><rect x="148" y="16" width="1" height="4.5" fill="#d0d0d0"/><rect x="155" y="18" width="1" height="2.5" fill="#c8c8c8"/><rect x="163" y="16" width="1" height="4.5" fill="#d0d0d0"/><rect x="170" y="18" width="1" height="2.5" fill="#c8c8c8"/><rect x="178" y="16" width="1" height="4.5" fill="#d0d0d0"/><rect x="185" y="18" width="1" height="2.5" fill="#c8c8c8"/><rect x="192" y="16" width="1" height="4.5" fill="#d0d0d0"/><rect x="200" y="18" width="1" height="2.5" fill="#c8c8c8"/><rect x="207" y="12" width="1" height="8.5" fill="#d8d8d8"/><rect x="215" y="18" width="1" height="2.5" fill="#c8c8c8"/><rect x="222" y="16" width="1" height="4.5" fill="#d0d0d0"/><rect x="229" y="18" width="1" height="2.5" fill="#c8c8c8"/><rect x="237" y="16" width="1" height="4.5" fill="#d0d0d0"/><rect x="244" y="18" width="1" height="2.5" fill="#c8c8c8"/><rect x="252" y="16" width="1" height="4.5" fill="#d0d0d0"/><rect x="259" y="18" width="1" height="2.5" fill="#c8c8c8"/><rect x="267" y="16" width="1" height="4.5" fill="#d0d0d0"/><rect x="274" y="18" width="1" height="2.5" fill="#c8c8c8"/><rect x="281" y="12" width="1" height="8.5" fill="#d8d8d8"/><rect x="289" y="18" width="1" height="2.5" fill="#c8c8c8"/><rect x="296" y="16" width="1" height="4.5" fill="#d0d0d0"/><rect x="304" y="18" width="1" height="2.5" fill="#c8c8c8"/><rect x="311" y="16" width="1" height="4.5" fill="#d0d0d0"/><rect x="318" y="18" width="1" height="2.5" fill="#c8c8c8"/><rect x="326" y="16" width="1" height="4.5" fill="#d0d0d0"/><rect x="333" y="18" width="1" height="2.5" fill="#c8c8c8"/><rect x="341" y="16" width="1" height="4.5" fill="#d0d0d0"/><rect x="348" y="18" width="1" height="2.5" fill="#c8c8c8"/><rect x="356" y="12" width="1" height="8.5" fill="#d8d8d8"/><rect x="363" y="18" width="1" height="2.5" fill="#c8c8c8"/><rect x="370" y="16" width="1" height="4.5" fill="#d0d0d0"/><rect x="378" y="18" width="1" height="2.5" fill="#c8c8c8"/><rect x="385" y="16" width="1" height="4.5" fill="#d0d0d0"/><rect x="393" y="18" width="1" height="2.5" fill="#c8c8c8"/><rect x="400" y="16" width="1" height="4.5" fill="#d0d0d0"/><rect x="407" y="18" width="1" height="2.5" fill="#c8c8c8"/><rect x="415" y="16" width="1" height="4.5" fill="#d0d0d0"/><rect x="422" y="18" width="1" height="2.5" fill="#c8c8c8"/><rect x="430" y="12" width="1" height="8.5" fill="#d8d8d8"/><rect x="437" y="18" width="1" height="2.5" fill="#c8c8c8"/><rect x="445" y="16" width="1" height="4.5" fill="#d0d0d0"/><rect x="452" y="18" width="1" height="2.5" fill="#c8c8c8"/><rect x="459" y="16" width="1" height="4.5" fill="#d0d0d0"/><rect x="467" y="18" width="1" height="2.5" fill="#c8c8c8"/><rect x="474" y="16" width="1" height="4.5" fill="#d0d0d0"/><rect x="482" y="18" width="1" height="2.5" fill="#c8c8c8"/><rect x="489" y="16" width="1" height="4.5" fill="#d0d0d0"/><rect x="496" y="18" width="1" height="2.5" fill="#c8c8c8"/><rect x="504" y="12" width="1" height="8.5" fill="#d8d8d8"/><rect x="511" y="18" width="1" height="2.5" fill="#c8c8c8"/><rect x="519" y="16" width="1" height="4.5" fill="#d0d0d0"/><rect x="526" y="18" width="1" height="2.5" fill="#c8c8c8"/><rect x="534" y="16" width="1" height="4.5" fill="#d0d0d0"/><rect x="541" y="18" width="1" height="2.5" fill="#c8c8c8"/><rect x="548" y="16" width="1" height="4.5" fill="#d0d0d0"/><rect x="556" y="18" width="1" height="2.5" fill="#c8c8c8"/><rect x="563" y="16" width="1" height="4.5" fill="#d0d0d0"/><rect x="571" y="18" width="1" height="2.5" fill="#c8c8c8"/><rect x="578" y="12" width="1" height="8.5" fill="#d8d8d8"/><rect x="585" y="18" width="1" height="2.5" fill="#c8c8c8"/><rect x="593" y="16" width="1" height="4.5" fill="#d0d0d0"/><rect x="600" y="18" width="1" height="2.5" fill="#c8c8c8"/><rect x="608" y="16" width="1" height="4.5" fill="#d0d0d0"/><rect x="615" y="18" width="1" height="2.5" fill="#c8c8c8"/><rect x="623" y="16" width="1" height="4.5" fill="#d0d0d0"/><rect x="630" y="18" width="1" height="2.5" fill="#c8c8c8"/><rect x="637" y="16" width="1" height="4.5" fill="#d0d0d0"/><rect x="645" y="18" width="1" height="2.5" fill="#c8c8c8"/><rect x="652" y="12" width="1" height="8.5" fill="#d8d8d8"/><rect x="660" y="18" width="1" height="2.5" fill="#c8c8c8"/><rect x="667" y="16" width="1" height="4.5" fill="#d0d0d0"/><rect x="675" y="18" width="1" height="2.5" fill="#c8c8c8"/><rect x="682" y="16" width="1" height="4.5" fill="#d0d0d0"/><rect x="689" y="18" width="1" height="2.5" fill="#c8c8c8"/><rect x="697" y="16" width="1" height="4.5" fill="#d0d0d0"/><rect x="704" y="18" width="1" height="2.5" fill="#c8c8c8"/><rect x="712" y="16" width="1" height="4.5" fill="#d0d0d0"/><rect x="719" y="18" width="1" height="2.5" fill="#c8c8c8"/><rect x="726" y="12" width="1" height="8.5" fill="#d8d8d8"/><rect x="734" y="18" width="1" height="2.5" fill="#c8c8c8"/><rect x="741" y="16" width="1" height="4.5" fill="#d0d0d0"/><rect x="749" y="18" width="1" height="2.5" fill="#c8c8c8"/><rect x="756" y="16" width="1" height="4.5" fill="#d0d0d0"/><rect x="764" y="18" width="1" height="2.5" fill="#c8c8c8"/><rect x="771" y="16" width="1" height="4.5" fill="#d0d0d0"/><rect x="778" y="18" width="1" height="2.5" fill="#c8c8c8"/><rect x="786" y="16" width="1" height="4.5" fill="#d0d0d0"/><rect x="793" y="18" width="1" height="2.5" fill="#c8c8c8"/><rect x="801" y="12" width="1" height="8.5" fill="#d8d8d8"/><rect x="808" y="18" width="1" height="2.5" fill="#c8c8c8"/><rect x="815" y="16" width="1" height="4.5" fill="#d0d0d0"/><rect x="823" y="18" width="1" height="2.5" fill="#c8c8c8"/><rect x="830" y="16" width="1" height="4.5" fill="#d0d0d0"/><rect x="838" y="18" width="1" height="2.5" fill="#c8c8c8"/><rect x="845" y="16" width="1" height="4.5" fill="#d0d0d0"/><rect x="853" y="18" width="1" height="2.5" fill="#c8c8c8"/><rect x="860" y="16" width="1" height="4.5" fill="#d0d0d0"/><rect x="867" y="18" width="1" height="2.5" fill="#c8c8c8"/><rect x="875" y="12" width="1" height="8.5" fill="#d8d8d8"/><rect x="882" y="18" width="1" height="2.5" fill="#c8c8c8"/><rect x="890" y="16" width="1" height="4.5" fill="#d0d0d0"/><rect x="897" y="18" width="1" height="2.5" fill="#c8c8c8"/><rect x="904" y="16" width="1" height="4.5" fill="#d0d0d0"/><rect x="912" y="18" width="1" height="2.5" fill="#c8c8c8"/><rect x="919" y="16" width="1" height="4.5" fill="#d0d0d0"/><rect x="927" y="18" width="1" height="2.5" fill="#c8c8c8"/><rect x="934" y="16" width="1" height="4.5" fill="#d0d0d0"/><rect x="942" y="18" width="1" height="2.5" fill="#c8c8c8"/><rect x="949" y="12" width="1" height="8.5" fill="#d8d8d8"/><rect x="956" y="18" width="1" height="2.5" fill="#c8c8c8"/><rect x="964" y="16" width="1" height="4.5" fill="#d0d0d0"/><rect x="971" y="18" width="1" height="2.5" fill="#c8c8c8"/><rect x="979" y="16" width="1" height="4.5" fill="#d0d0d0"/><rect x="986" y="18" width="1" height="2.5" fill="#c8c8c8"/><rect x="993" y="16" width="1" height="4.5" fill="#d0d0d0"/><rect x="1001" y="18" width="1" height="2.5" fill="#c8c8c8"/><rect x="1008" y="16" width="1" height="4.5" fill="#d0d0d0"/><rect x="1016" y="18" width="1" height="2.5" fill="#c8c8c8"/><rect x="1023" y="12" width="1" height="8.5" fill="#d8d8d8"/><rect x="1031" y="18" width="1" height="2.5" fill="#c8c8c8"/><rect x="1038" y="16" width="1" height="4.5" fill="#d0d0d0"/><rect x="1045" y="18" width="1" height="2.5" fill="#c8c8c8"/><rect x="1053" y="16" width="1" height="4.5" fill="#d0d0d0"/><rect x="1060" y="18" width="1" height="2.5" fill="#c8c8c8"/><rect x="1068" y="16" width="1" height="4.5" fill="#d0d0d0"/><rect x="1075" y="18" width="1" height="2.5" fill="#c8c8c8"/><rect x="1083" y="16" width="1" height="4.5" fill="#d0d0d0"/><rect x="1090" y="18" width="1" height="2.5" fill="#c8c8c8"/><rect x="1097" y="12" width="1" height="8.5" fill="#d8d8d8"/><rect x="1105" y="18" width="1" height="2.5" fill="#c8c8c8"/><rect x="1112" y="16" width="1" height="4.5" fill="#d0d0d0"/><rect x="1120" y="18" width="1" height="2.5" fill="#c8c8c8"/><rect x="1127" y="16" width="1" height="4.5" fill="#d0d0d0"/><rect x="1134" y="18" width="1" height="2.5" fill="#c8c8c8"/><rect x="1142" y="16" width="1" height="4.5" fill="#d0d0d0"/><rect x="1149" y="18" width="1" height="2.5" fill="#c8c8c8"/><rect x="1157" y="16" width="1" height="4.5" fill="#d0d0d0"/><rect x="1164" y="18" width="1" height="2.5" fill="#c8c8c8"/><rect x="1172" y="12" width="1" height="8.5" fill="#d8d8d8"/><rect x="1179" y="18" width="1" height="2.5" fill="#c8c8c8"/><rect x="1186" y="16" width="1" height="4.5" fill="#d0d0d0"/><rect x="1194" y="18" width="1" height="2.5" fill="#c8c8c8"/><rect x="1201" y="16" width="1" height="4.5" fill="#d0d0d0"/><rect x="1209" y="18" width="1" height="2.5" fill="#c8c8c8"/><rect x="1216" y="16" width="1" height="4.5" fill="#d0d0d0"/><rect x="1223" y="18" width="1" height="2.5" fill="#c8c8c8"/><rect x="1231" y="16" width="1" height="4.5" fill="#d0d0d0"/><rect x="1238" y="18" width="1" height="2.5" fill="#c8c8c8"/><rect x="1246" y="12" width="1" height="8.5" fill="#d8d8d8"/><rect x="1253" y="18" width="1" height="2.5" fill="#c8c8c8"/><rect x="1261" y="16" width="1" height="4.5" fill="#d0d0d0"/><rect x="1268" y="18" width="1" height="2.5" fill="#c8c8c8"/><rect x="1275" y="16" width="1" height="4.5" fill="#d0d0d0"/><rect x="1283" y="18" width="1" height="2.5" fill="#c8c8c8"/><rect x="1290" y="16" width="1" height="4.5" fill="#d0d0d0"/><rect x="1298" y="18" width="1" height="2.5" fill="#c8c8c8"/><rect x="1305" y="16" width="1" height="4.5" fill="#d0d0d0"/><rect x="1312" y="18" width="1" height="2.5" fill="#c8c8c8"/><rect x="1320" y="12" width="1" height="8.5" fill="#d8d8d8"/><rect x="1327" y="18" width="1" height="2.5" fill="#c8c8c8"/><rect x="1335" y="16" width="1" height="4.5" fill="#d0d0d0"/><rect x="1342" y="18" width="1" height="2.5" fill="#c8c8c8"/><rect x="1350" y="16" width="1" height="4.5" fill="#d0d0d0"/><rect x="1357" y="18" width="1" height="2.5" fill="#c8c8c8"/><rect x="1364" y="16" width="1" height="4.5" fill="#d0d0d0"/></svg>
<div style="left:12.319999999999993px;width:600px;text-align:center;top:124.8px;height:18.4px;line-height:18.4px;font-size:9.2px;color:#d4d4d4;white-space:nowrap;-webkit-text-stroke:0">-20</div>
<div style="left:86.5px;width:600px;text-align:center;top:124.8px;height:18.4px;line-height:18.4px;font-size:9.2px;color:#d4d4d4;white-space:nowrap;-webkit-text-stroke:0">0</div>
<div style="left:160.68px;width:600px;text-align:center;top:124.8px;height:18.4px;line-height:18.4px;font-size:9.2px;color:#d4d4d4;white-space:nowrap;-webkit-text-stroke:0">20</div>
<div style="left:234.86px;width:600px;text-align:center;top:124.8px;height:18.4px;line-height:18.4px;font-size:9.2px;color:#d4d4d4;white-space:nowrap;-webkit-text-stroke:0">40</div>
<div style="left:309.03999999999996px;width:600px;text-align:center;top:124.8px;height:18.4px;line-height:18.4px;font-size:9.2px;color:#d4d4d4;white-space:nowrap;-webkit-text-stroke:0">60</div>
<div style="left:383.22px;width:600px;text-align:center;top:124.8px;height:18.4px;line-height:18.4px;font-size:9.2px;color:#d4d4d4;white-space:nowrap;-webkit-text-stroke:0">80</div>
<div style="left:457.4000000000001px;width:600px;text-align:center;top:124.8px;height:18.4px;line-height:18.4px;font-size:9.2px;color:#d4d4d4;white-space:nowrap;-webkit-text-stroke:0">100</div>
<div style="left:531.5799999999999px;width:600px;text-align:center;top:124.8px;height:18.4px;line-height:18.4px;font-size:9.2px;color:#d4d4d4;white-space:nowrap;-webkit-text-stroke:0">120</div>
<div style="left:605.76px;width:600px;text-align:center;top:124.8px;height:18.4px;line-height:18.4px;font-size:9.2px;color:#d4d4d4;white-space:nowrap;-webkit-text-stroke:0">140</div>
<div style="left:679.94px;width:600px;text-align:center;top:124.8px;height:18.4px;line-height:18.4px;font-size:9.2px;color:#d4d4d4;white-space:nowrap;-webkit-text-stroke:0">160</div>
<div style="left:754.1199999999999px;width:600px;text-align:center;top:124.8px;height:18.4px;line-height:18.4px;font-size:9.2px;color:#d4d4d4;white-space:nowrap;-webkit-text-stroke:0">180</div>
<div style="left:828.3000000000002px;width:600px;text-align:center;top:124.8px;height:18.4px;line-height:18.4px;font-size:9.2px;color:#d4d4d4;white-space:nowrap;-webkit-text-stroke:0">200</div>
<div style="left:902.48px;width:600px;text-align:center;top:124.8px;height:18.4px;line-height:18.4px;font-size:9.2px;color:#d4d4d4;white-space:nowrap;-webkit-text-stroke:0">220</div>
<div style="left:976.6599999999999px;width:600px;text-align:center;top:124.8px;height:18.4px;line-height:18.4px;font-size:9.2px;color:#d4d4d4;white-space:nowrap;-webkit-text-stroke:0">240</div>
<div style="left:1050.8400000000001px;width:600px;text-align:center;top:124.8px;height:18.4px;line-height:18.4px;font-size:9.2px;color:#d4d4d4;white-space:nowrap;-webkit-text-stroke:0">260</div>
<div style="left:1125.02px;width:600px;text-align:center;top:124.8px;height:18.4px;line-height:18.4px;font-size:9.2px;color:#d4d4d4;white-space:nowrap;-webkit-text-stroke:0">280</div>
<div style="left:1199.2px;width:600px;text-align:center;top:124.8px;height:18.4px;line-height:18.4px;font-size:9.2px;color:#d4d4d4;white-space:nowrap;-webkit-text-stroke:0">300</div>
<div style="left:1273.38px;width:600px;text-align:center;top:124.8px;height:18.4px;line-height:18.4px;font-size:9.2px;color:#d4d4d4;white-space:nowrap;-webkit-text-stroke:0">320</div>
<svg style="position:absolute;left:233px;top:148px;" width="21" height="881" viewBox="0 0 21 881"><rect x="16" y="7" width="5" height="1" fill="#c8c8c8"/><rect x="18" y="14" width="3" height="1" fill="#c8c8c8"/><rect x="16" y="21" width="5" height="1" fill="#c8c8c8"/><rect x="18" y="29" width="3" height="1" fill="#c8c8c8"/><rect x="16" y="36" width="5" height="1" fill="#c8c8c8"/><rect x="18" y="44" width="3" height="1" fill="#c8c8c8"/><rect x="12" y="51" width="9" height="1" fill="#d4d4d4"/><rect x="18" y="59" width="3" height="1" fill="#c8c8c8"/><rect x="16" y="66" width="5" height="1" fill="#c8c8c8"/><rect x="18" y="73" width="3" height="1" fill="#c8c8c8"/><rect x="16" y="81" width="5" height="1" fill="#c8c8c8"/><rect x="18" y="88" width="3" height="1" fill="#c8c8c8"/><rect x="16" y="96" width="5" height="1" fill="#c8c8c8"/><rect x="18" y="103" width="3" height="1" fill="#c8c8c8"/><rect x="16" y="110" width="5" height="1" fill="#c8c8c8"/><rect x="18" y="118" width="3" height="1" fill="#c8c8c8"/><rect x="12" y="125" width="9" height="1" fill="#d4d4d4"/><rect x="18" y="133" width="3" height="1" fill="#c8c8c8"/><rect x="16" y="140" width="5" height="1" fill="#c8c8c8"/><rect x="18" y="148" width="3" height="1" fill="#c8c8c8"/><rect x="16" y="155" width="5" height="1" fill="#c8c8c8"/><rect x="18" y="162" width="3" height="1" fill="#c8c8c8"/><rect x="16" y="170" width="5" height="1" fill="#c8c8c8"/><rect x="18" y="177" width="3" height="1" fill="#c8c8c8"/><rect x="16" y="185" width="5" height="1" fill="#c8c8c8"/><rect x="18" y="192" width="3" height="1" fill="#c8c8c8"/><rect x="12" y="199" width="9" height="1" fill="#d4d4d4"/><rect x="18" y="207" width="3" height="1" fill="#c8c8c8"/><rect x="16" y="214" width="5" height="1" fill="#c8c8c8"/><rect x="18" y="222" width="3" height="1" fill="#c8c8c8"/><rect x="16" y="229" width="5" height="1" fill="#c8c8c8"/><rect x="18" y="237" width="3" height="1" fill="#c8c8c8"/><rect x="16" y="244" width="5" height="1" fill="#c8c8c8"/><rect x="18" y="251" width="3" height="1" fill="#c8c8c8"/><rect x="16" y="259" width="5" height="1" fill="#c8c8c8"/><rect x="18" y="266" width="3" height="1" fill="#c8c8c8"/><rect x="12" y="274" width="9" height="1" fill="#d4d4d4"/><rect x="18" y="281" width="3" height="1" fill="#c8c8c8"/><rect x="16" y="288" width="5" height="1" fill="#c8c8c8"/><rect x="18" y="296" width="3" height="1" fill="#c8c8c8"/><rect x="16" y="303" width="5" height="1" fill="#c8c8c8"/><rect x="18" y="311" width="3" height="1" fill="#c8c8c8"/><rect x="16" y="318" width="5" height="1" fill="#c8c8c8"/><rect x="18" y="326" width="3" height="1" fill="#c8c8c8"/><rect x="16" y="333" width="5" height="1" fill="#c8c8c8"/><rect x="18" y="340" width="3" height="1" fill="#c8c8c8"/><rect x="12" y="348" width="9" height="1" fill="#d4d4d4"/><rect x="18" y="355" width="3" height="1" fill="#c8c8c8"/><rect x="16" y="363" width="5" height="1" fill="#c8c8c8"/><rect x="18" y="370" width="3" height="1" fill="#c8c8c8"/><rect x="16" y="377" width="5" height="1" fill="#c8c8c8"/><rect x="18" y="385" width="3" height="1" fill="#c8c8c8"/><rect x="16" y="392" width="5" height="1" fill="#c8c8c8"/><rect x="18" y="400" width="3" height="1" fill="#c8c8c8"/><rect x="16" y="407" width="5" height="1" fill="#c8c8c8"/><rect x="18" y="415" width="3" height="1" fill="#c8c8c8"/><rect x="12" y="422" width="9" height="1" fill="#d4d4d4"/><rect x="18" y="429" width="3" height="1" fill="#c8c8c8"/><rect x="16" y="437" width="5" height="1" fill="#c8c8c8"/><rect x="18" y="444" width="3" height="1" fill="#c8c8c8"/><rect x="16" y="452" width="5" height="1" fill="#c8c8c8"/><rect x="18" y="459" width="3" height="1" fill="#c8c8c8"/><rect x="16" y="467" width="5" height="1" fill="#c8c8c8"/><rect x="18" y="474" width="3" height="1" fill="#c8c8c8"/><rect x="16" y="481" width="5" height="1" fill="#c8c8c8"/><rect x="18" y="489" width="3" height="1" fill="#c8c8c8"/><rect x="12" y="496" width="9" height="1" fill="#d4d4d4"/><rect x="18" y="504" width="3" height="1" fill="#c8c8c8"/><rect x="16" y="511" width="5" height="1" fill="#c8c8c8"/><rect x="18" y="518" width="3" height="1" fill="#c8c8c8"/><rect x="16" y="526" width="5" height="1" fill="#c8c8c8"/><rect x="18" y="533" width="3" height="1" fill="#c8c8c8"/><rect x="16" y="541" width="5" height="1" fill="#c8c8c8"/><rect x="18" y="548" width="3" height="1" fill="#c8c8c8"/><rect x="16" y="556" width="5" height="1" fill="#c8c8c8"/><rect x="18" y="563" width="3" height="1" fill="#c8c8c8"/><rect x="12" y="570" width="9" height="1" fill="#d4d4d4"/><rect x="18" y="578" width="3" height="1" fill="#c8c8c8"/><rect x="16" y="585" width="5" height="1" fill="#c8c8c8"/><rect x="18" y="593" width="3" height="1" fill="#c8c8c8"/><rect x="16" y="600" width="5" height="1" fill="#c8c8c8"/><rect x="18" y="607" width="3" height="1" fill="#c8c8c8"/><rect x="16" y="615" width="5" height="1" fill="#c8c8c8"/><rect x="18" y="622" width="3" height="1" fill="#c8c8c8"/><rect x="16" y="630" width="5" height="1" fill="#c8c8c8"/><rect x="18" y="637" width="3" height="1" fill="#c8c8c8"/><rect x="12" y="645" width="9" height="1" fill="#d4d4d4"/><rect x="18" y="652" width="3" height="1" fill="#c8c8c8"/><rect x="16" y="659" width="5" height="1" fill="#c8c8c8"/><rect x="18" y="667" width="3" height="1" fill="#c8c8c8"/><rect x="16" y="674" width="5" height="1" fill="#c8c8c8"/><rect x="18" y="682" width="3" height="1" fill="#c8c8c8"/><rect x="16" y="689" width="5" height="1" fill="#c8c8c8"/><rect x="18" y="696" width="3" height="1" fill="#c8c8c8"/><rect x="16" y="704" width="5" height="1" fill="#c8c8c8"/><rect x="18" y="711" width="3" height="1" fill="#c8c8c8"/><rect x="12" y="719" width="9" height="1" fill="#d4d4d4"/><rect x="18" y="726" width="3" height="1" fill="#c8c8c8"/><rect x="16" y="734" width="5" height="1" fill="#c8c8c8"/><rect x="18" y="741" width="3" height="1" fill="#c8c8c8"/><rect x="16" y="748" width="5" height="1" fill="#c8c8c8"/><rect x="18" y="756" width="3" height="1" fill="#c8c8c8"/><rect x="16" y="763" width="5" height="1" fill="#c8c8c8"/><rect x="18" y="771" width="3" height="1" fill="#c8c8c8"/><rect x="16" y="778" width="5" height="1" fill="#c8c8c8"/><rect x="18" y="785" width="3" height="1" fill="#c8c8c8"/><rect x="12" y="793" width="9" height="1" fill="#d4d4d4"/><rect x="18" y="800" width="3" height="1" fill="#c8c8c8"/><rect x="16" y="808" width="5" height="1" fill="#c8c8c8"/><rect x="18" y="815" width="3" height="1" fill="#c8c8c8"/><rect x="16" y="823" width="5" height="1" fill="#c8c8c8"/><rect x="18" y="830" width="3" height="1" fill="#c8c8c8"/><rect x="16" y="837" width="5" height="1" fill="#c8c8c8"/><rect x="18" y="845" width="3" height="1" fill="#c8c8c8"/><rect x="16" y="852" width="5" height="1" fill="#c8c8c8"/><rect x="18" y="860" width="3" height="1" fill="#c8c8c8"/><rect x="12" y="867" width="9" height="1" fill="#d4d4d4"/><rect x="18" y="874" width="3" height="1" fill="#c8c8c8"/></svg>
<div style="left:208px;top:191.6px;width:60px;height:16px;line-height:16px;text-align:center;font-size:9.5px;color:#d0d0d0;-webkit-text-stroke:0;transform:rotate(-90deg)">0</div>
<div style="left:208px;top:265.78px;width:60px;height:16px;line-height:16px;text-align:center;font-size:9.5px;color:#d0d0d0;-webkit-text-stroke:0;transform:rotate(-90deg)">20</div>
<div style="left:208px;top:339.96000000000004px;width:60px;height:16px;line-height:16px;text-align:center;font-size:9.5px;color:#d0d0d0;-webkit-text-stroke:0;transform:rotate(-90deg)">40</div>
<div style="left:208px;top:414.14px;width:60px;height:16px;line-height:16px;text-align:center;font-size:9.5px;color:#d0d0d0;-webkit-text-stroke:0;transform:rotate(-90deg)">60</div>
<div style="left:208px;top:488.32000000000005px;width:60px;height:16px;line-height:16px;text-align:center;font-size:9.5px;color:#d0d0d0;-webkit-text-stroke:0;transform:rotate(-90deg)">80</div>
<div style="left:208px;top:562.5px;width:60px;height:16px;line-height:16px;text-align:center;font-size:9.5px;color:#d0d0d0;-webkit-text-stroke:0;transform:rotate(-90deg)">100</div>
<div style="left:208px;top:636.68px;width:60px;height:16px;line-height:16px;text-align:center;font-size:9.5px;color:#d0d0d0;-webkit-text-stroke:0;transform:rotate(-90deg)">120</div>
<div style="left:208px;top:710.86px;width:60px;height:16px;line-height:16px;text-align:center;font-size:9.5px;color:#d0d0d0;-webkit-text-stroke:0;transform:rotate(-90deg)">140</div>
<div style="left:208px;top:785.0400000000001px;width:60px;height:16px;line-height:16px;text-align:center;font-size:9.5px;color:#d0d0d0;-webkit-text-stroke:0;transform:rotate(-90deg)">160</div>
<div style="left:208px;top:859.22px;width:60px;height:16px;line-height:16px;text-align:center;font-size:9.5px;color:#d0d0d0;-webkit-text-stroke:0;transform:rotate(-90deg)">180</div>
<div style="left:208px;top:933.4000000000001px;width:60px;height:16px;line-height:16px;text-align:center;font-size:9.5px;color:#d0d0d0;-webkit-text-stroke:0;transform:rotate(-90deg)">200</div>
<div style="left:208px;top:1007.58px;width:60px;height:16px;line-height:16px;text-align:center;font-size:9.5px;color:#d0d0d0;-webkit-text-stroke:0;transform:rotate(-90deg)">220</div>
<div style="left:1618px;top:128px;width:18px;height:919px;background:#575757;"></div>
<svg style="position:absolute;left:1620px;top:131px;" width="12" height="10" viewBox="0 0 12 10"><path d="M1 9L6 1L11 9Z" fill="#8a8a8a"/></svg>
<svg style="position:absolute;left:1620px;top:1015px;" width="12" height="10" viewBox="0 0 12 10"><path d="M1 1L6 9L11 1Z" fill="#8a8a8a"/></svg>
<div style="left:1624px;top:264px;width:8px;height:66px;background:#8f8f8f;border-radius:4px"></div>
<div style="left:233px;top:1029px;width:1385px;height:18px;background:#585858;"></div>
<svg style="position:absolute;left:236px;top:1032px;" width="10" height="12" viewBox="0 0 10 12"><path d="M9 1L1 6L9 11Z" fill="#8a8a8a"/></svg>
<svg style="position:absolute;left:1603px;top:1032px;" width="10" height="12" viewBox="0 0 10 12"><path d="M1 1L9 6L1 11Z" fill="#8a8a8a"/></svg>
<div style="left:715px;top:1035px;width:410px;height:7px;background:#9a9a9a;border-radius:4px"></div>
<div style="left:375px;top:188px;width:1121px;height:802px;background:#fff;border-top:1px solid #62648e;border-left:1px solid #62648e"></div>
<div style="left:386px;top:199px;width:1099px;height:779px;background:transparent;border:1px solid #a8a8a8"></div>
<div style="left:935px;top:199px;width:1px;height:779px;background:#a8a8a8;"></div>
<div style="left:561px;top:921px;width:201px;height:17px;background:transparent;border:1px solid #7fb0ec"></div>
<div style="left:360px;width:600px;text-align:center;top:914px;height:30px;line-height:30px;font-size:15px;color:#222;white-space:nowrap;-webkit-text-stroke:0">2</div>
<div style="left:1109px;top:921px;width:201px;height:17px;background:transparent;border:1px solid #7fb0ec"></div>
<div style="left:909px;width:600px;text-align:center;top:914px;height:30px;line-height:30px;font-size:15px;color:#222;white-space:nowrap;-webkit-text-stroke:0">3</div>
<svg style="position:absolute;left:1100px;top:290px;" width="240" height="310" viewBox="0 0 240 310">
    <g transform="translate(-1100,-290)">
      <!-- ground -->
      <path d="M1108 554 Q1140 551 1177 550.5 Q1190 553 1201 555.5 Q1215 551 1229 552.5 Q1250 556 1275 560 Q1300 563 1327 565" stroke="#e0b08a" stroke-width="1.1" fill="none"/>
      <g stroke="#eed6c2" stroke-width="0.8" fill="none">
        <path d="M1110 560 H1180 M1200 562 H1300 M1115 567 H1200 M1230 568 H1290 M1125 574 H1270 M1150 580 H1250 M1180 585 H1230"/>
      </g>
      <!-- shading tone -->
      <g fill="#5a6488" opacity="0.09">
        <path d="M1135 460 Q1160 478 1190 488 L1200 491 L1217 492 L1221 482 Q1205 470 1190 462 Q1170 455 1150 450 Z"/>
        <path d="M1231 398 Q1250 420 1255 450 Q1257 480 1255 500 L1238 495 Q1240 460 1232 430 Z"/>
        <path d="M1251 434 Q1258 410 1270 375 L1285 358 Q1265 380 1255 400 Z"/>
        <path d="M1108 400 Q1130 420 1145 460 L1133 460 Q1120 440 1108 430 Z"/>
        <path d="M1186 375 Q1210 382 1228 397 Q1232 420 1230 440 Q1215 420 1200 400 Z"/>
        <path d="M1140 320 Q1152 326 1158 345 L1150 347 Q1145 335 1135 326 Z"/>
      </g>
      <!-- head -->
      <path d="M1109 339.7 Q1131 345 1160.2 350.2 L1157.5 362 Q1140 368 1124.7 373.8 L1109 379 Z" fill="#4f5a7a"/>
      <g stroke="#eef0f5" stroke-width="1" fill="none">
        <path d="M1112 350 l2 6 M1120 351 l1.5 7 M1128 352 l1 6 M1136 353 l1 7 M1144 354 l0 6 M1152 354 l-1 5"/>
        <path d="M1112 377 l1 -6 M1120 374 l1 -6 M1128 372 l1 -5 M1136 369 l1 -6 M1144 366 l0 -5 M1152 364 l0 -4"/>
      </g>
      <g stroke="#4c5676" stroke-width="1.25" fill="none" stroke-linecap="round" stroke-linejoin="round">
        <!-- head -->
        <path d="M1109 309.4 Q1118 313.4 1135 313.4 Q1144 315 1152.3 326.5 Q1157 334 1158.8 339.7 Q1161 346 1161.5 350.2"/>
        <path d="M1109 339.7 Q1131 345 1160.2 350.2"/>
        <path d="M1109 379 Q1124.7 373.8 1157.5 362"/>
        <path d="M1109 397.4 Q1131.3 389.6 1155 379 Q1158 372 1157.5 363"/>
        <path d="M1109 404 Q1125 398 1140 395"/>
        <!-- neck front down to chest -->
        <path d="M1157 363 Q1158 385 1159 405 Q1163 412 1168 418.5 Q1173 428 1178 438.8 Q1184 450 1189.4 461.3 Q1190 470 1190.5 480"/>
        <!-- neck back, back, tail -->
        <path d="M1161.5 350.2 Q1164 366 1166.9 376.9 Q1170 378 1174.8 378 Q1180 375 1186 374.6 Q1192 375 1197.3 376.9 Q1205 380 1211.9 384.8 Q1220 391 1226.6 397.1 Q1234 392 1242.3 387 Q1256 376 1270 363.4 Q1288 354 1305 352 Q1288 360 1270 374.6 Q1264 384 1260.3 396 Q1255 415 1251.3 434.3"/>
        <!-- right thigh & leg outer -->
        <path d="M1251.3 434.3 Q1255 442 1255.8 450 Q1257 465 1255.8 480 Q1256 492 1254.9 499.7 Q1252 505 1251.7 509.3 Q1256 518 1256.5 528.5 Q1254 540 1253.3 547.6 Q1255 556 1258.1 563.5 Q1262 570 1264.5 576.3"/>
        <path d="M1228.8 396 Q1232 420 1231 438.8 Q1227 455 1222 468 Q1219 476 1217.5 482"/>
        <path d="M1204 440 Q1208 452 1210.8 462.5 Q1214 473 1217.6 482.8 Q1221 495 1225 507.5 Q1230 520 1237.4 534.8 Q1236 550 1232.6 563.5 Q1228 570 1223 573.1"/>
        <path d="M1223 573 Q1240 577 1264 576"/>
        <!-- arm right -->
        <path d="M1204 441 Q1207 439 1209.7 440 Q1214 445 1217.5 452.3 Q1219 460 1219.8 470"/>
        <path d="M1187 398 Q1196 420 1204 439"/>
        <!-- belly -->
        <path d="M1121 420 Q1121 435 1122.5 444 Q1127 454 1135.4 460.3 Q1143 466 1150 471.5 Q1156 476 1161.3 480.5 Q1168 485 1174.8 488.4"/>
        <path d="M1189.4 479.4 Q1195 488 1200.7 490.7 Q1210 492 1217.6 491.8 Q1221 490 1223.2 487.3"/>
        <!-- left leg -->
        <path d="M1142.1 465.9 Q1136 475 1133.1 485 Q1129 494 1128.6 503 Q1130 512 1133.1 518.8 Q1137 529 1139.9 539 Q1139 547 1135.4 552.6 Q1125 560 1108 563.5"/>
        <path d="M1174.8 488.4 Q1170 494 1165.8 498.5 Q1159 504 1153.4 509.8 Q1155 520 1156.8 530 Q1158 538 1159 547 Q1157 555 1153.4 560 Q1149 566 1144.9 570 Q1125 570 1108 568"/>
        <!-- arms -->
        <path d="M1174.8 488.4 Q1176 496 1177 503 Q1178 506 1179.3 507.5"/>
        <path d="M1189.4 479.4 Q1192 484 1194 488.4 Q1195 496 1195 503 Q1197 507 1199.6 509.8"/>
        <path d="M1109 462 Q1116 470 1117 485 Q1112 492 1116 500 Q1114 505 1110 507"/>
      </g>
      <!-- hatching -->
      <g stroke="#7a83a0" stroke-width="0.65" fill="none">
        <path d="M1125 318 Q1135 322 1140 330 M1115 322 Q1125 325 1130 335 M1140 318 Q1150 326 1154 338 M1128 328 Q1134 330 1138 338 M1146 322 Q1154 332 1157 344"/>
        <path d="M1180 380 Q1192 395 1200 420 M1186 378 Q1200 395 1208 425 M1194 378 Q1208 394 1216 420 M1202 381 Q1216 396 1222 420 M1210 386 Q1222 398 1226 415 M1176 388 Q1184 400 1190 420"/>
        <path d="M1200 395 Q1212 420 1216 450 M1208 400 Q1218 425 1222 445 M1214 410 Q1222 430 1226 450"/>
        <path d="M1232 400 Q1242 420 1246 450 M1236 398 Q1248 420 1252 445 M1240 395 Q1250 410 1254 430 M1244 390 Q1252 400 1258 415"/>
        <path d="M1238 460 Q1248 480 1250 500 M1242 455 Q1250 470 1252 490 M1236 520 Q1244 535 1248 560 M1242 518 Q1248 530 1250 545 M1228 505 Q1236 515 1238 530"/>
        <path d="M1250 400 Q1258 388 1270 372 M1246 410 Q1256 398 1266 382 M1244 420 Q1252 410 1260 398 M1256 375 Q1268 365 1285 358"/>
        <path d="M1112 410 Q1125 430 1132 452 M1120 400 Q1135 420 1145 450 M1135 405 Q1150 425 1160 455 M1148 405 Q1160 425 1168 450 M1128 415 Q1140 435 1150 460"/>
        <path d="M1145 466 Q1165 476 1185 482 M1150 471 Q1168 480 1188 486 M1155 476 Q1172 484 1190 489 M1162 481 Q1178 487 1192 490 M1152 462 Q1168 470 1186 476"/>
        <path d="M1132 470 Q1136 485 1140 500 M1146 505 Q1150 520 1152 540 M1136 528 Q1145 545 1150 555 M1150 498 Q1160 490 1168 486"/>
        <path d="M1110 402 Q1122 398 1138 395 M1115 392 Q1130 388 1150 383 M1160 395 Q1166 410 1172 425 M1164 380 Q1168 395 1170 410"/>
        <path d="M1198 445 Q1204 465 1210 480 M1194 452 Q1200 470 1204 485 M1200 492 Q1212 495 1222 492"/>
      </g>
      <!-- eye -->
      <path d="M1128 322 Q1134 318 1140 324 Q1136 330 1130 328 Z" fill="#4c5676"/>
      <g stroke="#4c5676" stroke-width="1.6" fill="none" stroke-linecap="round">
        <path d="M1130 319 Q1138 316 1144 322 M1141 326 Q1144 332 1143 336 M1150 330 Q1154 338 1156 345 M1112 320 Q1116 326 1118 332"/>
        <path d="M1160 352 Q1158 360 1157 364"/>
      </g>
      <g stroke="#7a83a0" stroke-width="0.9" fill="none">
        <path d="M1119 323 Q1124 330 1126 338 M1124 336 Q1136 340 1148 344 M1114 386 Q1130 382 1150 372 M1116 392 Q1134 386 1152 377"/>
      </g>
      <!-- toes -->
      <g stroke="#4c5676" stroke-width="1.1" fill="none">
        <path d="M1226 566 Q1222 570 1222 574 M1238 565 Q1238 570 1240 575 M1252 566 Q1258 570 1262 576"/>
        <path d="M1112 558 Q1110 563 1112 568 M1124 560 Q1122 565 1124 569 M1140 560 Q1138 565 1140 570"/>
      </g>
      <!-- claws -->
      <path d="M1223 573l-3 4 4 0zM1240 573l-2 4 4 -1zM1261 573l2 4 1 -4z" fill="#4c5676"/>
      <path d="M1120 568l-2 4 3 -1zM1137 569l-2 5 3 -2zM1176 506l1 4 2-4zM1199 510l1 4 2 -4z" fill="#4c5676"/>
    </g></svg>
<svg style="position:absolute;left:375px;top:188px;" width="1121" height="802" viewBox="0 0 1121 802"><rect x="87.80" y="48" width="1" height="685.6" fill="#c898d2"/><rect x="102.70" y="48" width="1" height="685.6" fill="#c898d2"/><rect x="141.80" y="48" width="1" height="685.6" fill="#c898d2"/><rect x="157.00" y="48" width="1" height="685.6" fill="#c898d2"/><rect x="196.50" y="48" width="1" height="685.6" fill="#c898d2"/><rect x="211.40" y="48" width="1" height="685.6" fill="#c898d2"/><rect x="250.90" y="48" width="1" height="685.6" fill="#c898d2"/><rect x="265.80" y="48" width="1" height="685.6" fill="#c898d2"/><rect x="305.30" y="48" width="1" height="685.6" fill="#c898d2"/><rect x="320.10" y="48" width="1" height="685.6" fill="#c898d2"/><rect x="359.60" y="48" width="1" height="685.6" fill="#c898d2"/><rect x="374.50" y="48" width="1" height="685.6" fill="#c898d2"/><rect x="414.00" y="48" width="1" height="685.6" fill="#c898d2"/><rect x="429.00" y="48" width="1" height="685.6" fill="#c898d2"/><rect x="468.30" y="48" width="1" height="685.6" fill="#c898d2"/><rect x="483.20" y="48" width="1" height="685.6" fill="#c898d2"/><rect x="637.20" y="48" width="1" height="685.6" fill="#c898d2"/><rect x="652.10" y="48" width="1" height="685.6" fill="#c898d2"/><rect x="691.20" y="48" width="1" height="685.6" fill="#c898d2"/><rect x="706.40" y="48" width="1" height="685.6" fill="#c898d2"/><rect x="745.90" y="48" width="1" height="685.6" fill="#c898d2"/><rect x="760.80" y="48" width="1" height="685.6" fill="#c898d2"/><rect x="800.30" y="48" width="1" height="685.6" fill="#c898d2"/><rect x="815.20" y="48" width="1" height="685.6" fill="#c898d2"/><rect x="854.70" y="48" width="1" height="685.6" fill="#c898d2"/><rect x="869.50" y="48" width="1" height="685.6" fill="#c898d2"/><rect x="909.00" y="48" width="1" height="685.6" fill="#c898d2"/><rect x="923.90" y="48" width="1" height="685.6" fill="#c898d2"/><rect x="963.40" y="48" width="1" height="685.6" fill="#c898d2"/><rect x="978.40" y="48" width="1" height="685.6" fill="#c898d2"/><rect x="1017.70" y="48" width="1" height="685.6" fill="#c898d2"/><rect x="1032.60" y="48" width="1" height="685.6" fill="#c898d2"/></svg>
<div style="left:423px;top:236px;width:476px;height:686px;background:transparent;border:1px solid #7d8ec4"></div>
<div style="left:972px;top:236px;width:476px;height:686px;background:transparent;border:1px solid #7d8ec4"></div>
<div style="left:972px;top:235px;width:421px;height:422px;background:transparent;border:1.5px solid #5b96e6"></div>
<div style="left:1182px;top:206px;width:1px;height:30px;background:#5b96e6;"></div>
<div style="left:1177px;top:201px;width:10px;height:10px;border-radius:50%;background:#fff;border:1.5px solid #6aa6ee"></div>
<div style="left:1177px;top:231px;width:10px;height:10px;border-radius:50%;background:#fff;border:1.5px solid #6aa6ee"></div>
<div style="left:1387px;top:231px;width:10px;height:10px;border-radius:50%;background:#fff;border:1.5px solid #6aa6ee"></div>
<div style="left:1387px;top:441px;width:10px;height:10px;border-radius:50%;background:#fff;border:1.5px solid #6aa6ee"></div>
<div style="left:1387px;top:651px;width:10px;height:10px;border-radius:50%;background:#fff;border:1.5px solid #6aa6ee"></div>
<div style="left:1177px;top:651px;width:10px;height:10px;border-radius:50%;background:#fff;border:1.5px solid #6aa6ee"></div>
<svg style="position:absolute;left:1241px;top:385px;" width="14" height="22" viewBox="0 0 14 22"><path d="M1.5 1.5V17L5.5 13L8.5 19.5L11 18.5L8 12H13.5Z" fill="#fff" stroke="#111" stroke-width="1.1"/></svg>
<div style="left:779px;top:71px;width:330px;height:596px;background:#555555;border-radius:3px;box-shadow:0 2px 6px rgba(0,0,0,0.5)"></div>
<svg style="position:absolute;left:932px;top:62px;" width="22" height="11" viewBox="0 0 22 11"><path d="M0 10.5L11 0L22 10.5Z" fill="#555555"/></svg>
<div style="left:792px;top:84px;width:144px;height:23px;background:#525252;border-radius:2px"></div>
<div style="left:802px;top:89px;width:12px;height:12px;background:#3a3a3a;border-radius:2px"></div>
<svg style="position:absolute;left:802px;top:89px;" width="12" height="12" viewBox="0 0 12 12"><path d="M2.5 5.8L4.8 8L9 3.2" stroke="#f2f2f2" stroke-width="1.3" fill="none"/></svg>
<div style="left:819px;top:84.5px;height:22px;line-height:22px;font-size:11px;color:#ececec;white-space:nowrap;">Activer le magnétisme</div>
<div style="left:941px;top:85.5px;height:22px;line-height:22px;font-size:11px;color:#dcdcdc;white-space:nowrap;">Tolérance d'écran:</div>
<div style="left:1032px;top:84px;width:50px;height:23px;background:#383838;border-radius:3px"></div>
<div style="left:1037px;top:84.5px;height:22px;line-height:22px;font-size:11px;color:#f4f4f4;white-space:nowrap;">17</div>
<svg style="position:absolute;left:1066px;top:91.5px;" width="10" height="8" viewBox="0 0 10 8"><path d="M1.5 2L5 5.5L8.5 2" stroke="#e0e0e0" stroke-width="1.3" fill="none"/></svg>
<div style="left:805px;top:116px;height:22px;line-height:22px;font-size:11px;color:#dcdcdc;white-space:nowrap;">Préréglage:</div>
<div style="left:867px;top:119px;width:194px;height:17px;background:#5c5c5c;border-radius:3px"></div>
<svg style="position:absolute;left:1045px;top:123.5px;" width="10" height="8" viewBox="0 0 10 8"><path d="M1.5 2L5 5.5L8.5 2" stroke="#e0e0e0" stroke-width="1.3" fill="none"/></svg>
<svg style="position:absolute;left:1069px;top:122px;" width="12" height="10" viewBox="0 0 12 10"><path d="M1 1.5H11M1 5H11M1 8.5H11" stroke="#cfcfcf" stroke-width="1.6"/></svg>
<div style="left:791px;top:151px;width:305px;height:80px;background:#505050;border-radius:2px"></div>
<div style="left:807px;top:159px;height:22px;line-height:22px;font-size:11px;color:#dcdcdc;white-space:nowrap;">Éléments:</div>
<div style="left:860px;top:161px;width:158px;height:18px;background:#5e5e5e;border-radius:3px"></div>
<div style="left:865px;top:159.0px;height:22px;line-height:22px;font-size:11px;color:#ffffff;white-space:nowrap;">Liste des éléments</div>
<svg style="position:absolute;left:1002px;top:166.0px;" width="10" height="8" viewBox="0 0 10 8"><path d="M1.5 2L5 5.5L8.5 2" stroke="#e0e0e0" stroke-width="1.3" fill="none"/></svg>
<div style="left:802px;top:183px;height:22px;line-height:22px;font-size:11px;color:#dcdcdc;white-space:nowrap;">Maximum:</div>
<div style="left:859px;top:184px;width:50px;height:20px;background:#383838;border-radius:3px"></div>
<div style="left:864px;top:183.0px;height:22px;line-height:22px;font-size:11px;color:#f4f4f4;white-space:nowrap;">6</div>
<svg style="position:absolute;left:893px;top:190.0px;" width="10" height="8" viewBox="0 0 10 8"><path d="M1.5 2L5 5.5L8.5 2" stroke="#e0e0e0" stroke-width="1.3" fill="none"/></svg>
<div style="left:860px;top:209px;width:12px;height:12px;background:#3a3a3a;border-radius:2px"></div>
<div style="left:877px;top:204.5px;height:22px;line-height:22px;font-size:11px;color:#dcdcdc;white-space:nowrap;">Afficher les éléments magnétiques</div>
<div style="left:791px;top:235px;width:305px;height:36px;background:#505050;border-radius:2px"></div>
<div style="left:809px;top:247px;width:12px;height:12px;background:#3a3a3a;border-radius:2px"></div>
<div style="left:826px;top:242px;height:22px;line-height:22px;font-size:11px;color:#e6e6e6;white-space:nowrap;">Accrocher uniquement aux objets visibles</div>
<div style="left:791px;top:276px;width:305px;height:57px;background:#505050;border-radius:2px"></div>
<div style="left:809px;top:287px;width:12px;height:12px;background:#3a3a3a;border-radius:2px"></div>
<div style="left:826px;top:282px;height:22px;line-height:22px;font-size:11px;color:#e6e6e6;white-space:nowrap;">Forcer l'alignement des pixels</div>
<div style="left:829px;top:309px;width:12px;height:12px;background:#4a4a4a;border-radius:2px"></div>
<svg style="position:absolute;left:829px;top:309px;" width="12" height="12" viewBox="0 0 12 12"><path d="M2.5 5.8L4.8 8L9 3.2" stroke="#8a8a8a" stroke-width="1.3" fill="none"/></svg>
<div style="left:846px;top:304px;height:22px;line-height:22px;font-size:11px;color:#9a9a9a;white-space:nowrap;">Déplacer par pixels entiers</div>
<div style="left:791px;top:337px;width:305px;height:168px;background:#505050;border-radius:2px"></div>
<div style="left:809px;top:349px;width:12px;height:12px;background:#3a3a3a;border-radius:2px"></div>
<div style="left:826px;top:344px;height:22px;line-height:22px;font-size:11px;color:#e6e6e6;white-space:nowrap;">Accrocher à la grille</div>
<div style="left:809px;top:371px;width:12px;height:12px;background:#3a3a3a;border-radius:2px"></div>
<div style="left:826px;top:366px;height:22px;line-height:22px;font-size:11px;color:#e6e6e6;white-space:nowrap;">Ancrer à la grille de référence</div>
<div style="left:809px;top:393px;width:12px;height:12px;background:#3a3a3a;border-radius:2px"></div>
<svg style="position:absolute;left:809px;top:393px;" width="12" height="12" viewBox="0 0 12 12"><path d="M2.5 5.8L4.8 8L9 3.2" stroke="#f2f2f2" stroke-width="1.3" fill="none"/></svg>
<div style="left:826px;top:388px;height:22px;line-height:22px;font-size:11px;color:#e6e6e6;white-space:nowrap;">Accrocher aux guides</div>
<div style="left:809px;top:415px;width:12px;height:12px;background:#3a3a3a;border-radius:2px"></div>
<svg style="position:absolute;left:809px;top:415px;" width="12" height="12" viewBox="0 0 12 12"><path d="M2.5 5.8L4.8 8L9 3.2" stroke="#f2f2f2" stroke-width="1.3" fill="none"/></svg>
<div style="left:826px;top:410px;height:22px;line-height:22px;font-size:11px;color:#e6e6e6;white-space:nowrap;">Accrocher à la planche</div>
<div style="left:829px;top:437px;width:12px;height:12px;background:#3a3a3a;border-radius:2px"></div>
<svg style="position:absolute;left:829px;top:437px;" width="12" height="12" viewBox="0 0 12 12"><path d="M2.5 5.8L4.8 8L9 3.2" stroke="#f2f2f2" stroke-width="1.3" fill="none"/></svg>
<div style="left:846px;top:432px;height:22px;line-height:22px;font-size:11px;color:#e6e6e6;white-space:nowrap;">Inclure les points médians de la planche</div>
<div style="left:809px;top:459px;width:12px;height:12px;background:#3a3a3a;border-radius:2px"></div>
<svg style="position:absolute;left:809px;top:459px;" width="12" height="12" viewBox="0 0 12 12"><path d="M2.5 5.8L4.8 8L9 3.2" stroke="#f2f2f2" stroke-width="1.3" fill="none"/></svg>
<div style="left:826px;top:454px;height:22px;line-height:22px;font-size:11px;color:#e6e6e6;white-space:nowrap;">Accrocher à la marge</div>
<div style="left:829px;top:481px;width:12px;height:12px;background:#3a3a3a;border-radius:2px"></div>
<svg style="position:absolute;left:829px;top:481px;" width="12" height="12" viewBox="0 0 12 12"><path d="M2.5 5.8L4.8 8L9 3.2" stroke="#f2f2f2" stroke-width="1.3" fill="none"/></svg>
<div style="left:846px;top:476px;height:22px;line-height:22px;font-size:11px;color:#e6e6e6;white-space:nowrap;">Inclure les points médians de la marge</div>
<div style="left:791px;top:509px;width:305px;height:146px;background:#505050;border-radius:2px"></div>
<div style="left:809px;top:521px;width:12px;height:12px;background:#3a3a3a;border-radius:2px"></div>
<svg style="position:absolute;left:809px;top:521px;" width="12" height="12" viewBox="0 0 12 12"><path d="M2.5 5.8L4.8 8L9 3.2" stroke="#f2f2f2" stroke-width="1.3" fill="none"/></svg>
<div style="left:826px;top:516px;height:22px;line-height:22px;font-size:11px;color:#e6e6e6;white-space:nowrap;">Accrocher aux cadres de sélection de l'objet</div>
<div style="left:829px;top:543px;width:12px;height:12px;background:#3a3a3a;border-radius:2px"></div>
<svg style="position:absolute;left:829px;top:543px;" width="12" height="12" viewBox="0 0 12 12"><path d="M2.5 5.8L4.8 8L9 3.2" stroke="#f2f2f2" stroke-width="1.3" fill="none"/></svg>
<div style="left:846px;top:538px;height:22px;line-height:22px;font-size:11px;color:#e6e6e6;white-space:nowrap;">Inclure les points médians du cadre de sélection</div>
<div style="left:829px;top:565px;width:12px;height:12px;background:#3a3a3a;border-radius:2px"></div>
<svg style="position:absolute;left:829px;top:565px;" width="12" height="12" viewBox="0 0 12 12"><path d="M2.5 5.8L4.8 8L9 3.2" stroke="#f2f2f2" stroke-width="1.3" fill="none"/></svg>
<div style="left:846px;top:560px;height:22px;line-height:22px;font-size:11px;color:#e6e6e6;white-space:nowrap;">Accrocher aux espacements et tailles</div>
<div style="left:809px;top:587px;width:12px;height:12px;background:#3a3a3a;border-radius:2px"></div>
<svg style="position:absolute;left:809px;top:587px;" width="12" height="12" viewBox="0 0 12 12"><path d="M2.5 5.8L4.8 8L9 3.2" stroke="#f2f2f2" stroke-width="1.3" fill="none"/></svg>
<div style="left:826px;top:582px;height:22px;line-height:22px;font-size:11px;color:#e6e6e6;white-space:nowrap;">Accrocher aux points clés de la forme</div>
<div style="left:809px;top:609px;width:12px;height:12px;background:#3a3a3a;border-radius:2px"></div>
<svg style="position:absolute;left:809px;top:609px;" width="12" height="12" viewBox="0 0 12 12"><path d="M2.5 5.8L4.8 8L9 3.2" stroke="#f2f2f2" stroke-width="1.3" fill="none"/></svg>
<div style="left:826px;top:604px;height:22px;line-height:22px;font-size:11px;color:#e6e6e6;white-space:nowrap;">Accrocher à la géométrie de l'objet</div>
<div style="left:809px;top:631px;width:12px;height:12px;background:#3a3a3a;border-radius:2px"></div>
<svg style="position:absolute;left:809px;top:631px;" width="12" height="12" viewBox="0 0 12 12"><path d="M2.5 5.8L4.8 8L9 3.2" stroke="#f2f2f2" stroke-width="1.3" fill="none"/></svg>
<div style="left:826px;top:626px;height:22px;line-height:22px;font-size:11px;color:#e6e6e6;white-space:nowrap;">Accrocher aux limites de la sélection de pixels</div>
<div style="left:1636px;top:130px;width:5px;height:917px;background:#4a4a4a;"></div>
<div style="left:1636px;top:100px;width:5px;height:30px;background:#3c3c3c;"></div>
<div style="left:1641px;top:100px;width:254px;height:947px;background:#4e4e4e;"></div>
<div style="left:1641px;top:101px;width:254px;height:29px;background:#404040;"></div>
<div style="left:1641px;top:102px;width:18px;height:28px;background:#3a3a3a;"></div>
<svg style="position:absolute;left:1646px;top:109px;" width="10" height="14" viewBox="0 0 10 14"><path d="M3 1V13M7 1V13" stroke="#888" stroke-width="1"/></svg>
<div style="left:1659px;top:102px;width:48px;height:28px;background:#4b4b4b;"></div>
<div style="left:1664px;top:104.5px;height:22px;line-height:22px;font-size:11px;color:#f0f0f0;white-space:nowrap;">Couleur</div>
<div style="left:1712px;top:104.5px;height:22px;line-height:22px;font-size:11px;color:#d4d4d4;white-space:nowrap;">Échantillons</div>
<div style="left:1780px;top:104.5px;height:22px;line-height:22px;font-size:11px;color:#d4d4d4;white-space:nowrap;">Trait</div>
<svg style="position:absolute;left:1884px;top:110px;" width="12" height="11" viewBox="0 0 12 11"><path d="M0 1.5H12M0 5.5H12M0 9.5H12" stroke="#ddd" stroke-width="2"/></svg>
<svg style="position:absolute;left:1650px;top:140px;" width="50" height="52" viewBox="0 0 50 52">
      <circle cx="18.6" cy="18.6" r="12.3" fill="#555"/>
      <circle cx="18.6" cy="18.6" r="9.2" fill="none" stroke="#f6f6f6" stroke-width="5.2"/>
      <path d="M10 27.5 L27.5 10" stroke="#e85a5a" stroke-width="2.8"/>
      <circle cx="18.6" cy="18.6" r="6.5" fill="#4a4a4a"/>
      <circle cx="31.6" cy="32.1" r="12.4" fill="#f8f8f8" stroke="#505050" stroke-width="1.3"/>
      <path d="M23.5 40 L39.5 24" stroke="#e85a5a" stroke-width="2.8"/>
      <circle cx="13" cy="37.8" r="6" fill="#f8f8f8" stroke="#505050" stroke-width="0.8"/>
      <path d="M9 42 L17.5 33.5" stroke="#e85a5a" stroke-width="1.5"/>
      <path d="M32 8 Q40 9 43 17" stroke="#bdbdbd" stroke-width="1.1" fill="none"/>
      <path d="M34 6 L31.5 8 L34 10.5 M40.5 16 L43 17.5 L44.5 14.5" stroke="#bdbdbd" stroke-width="1.1" fill="none"/></svg>
<svg style="position:absolute;left:1702px;top:143px;" width="22" height="22" viewBox="0 0 22 22"><path d="M3 19 L12 10" stroke="#cfcfcf" stroke-width="3" stroke-linecap="round"/><ellipse cx="16" cy="6.5" rx="4.3" ry="5" transform="rotate(40 16 6.5)" fill="#d49470"/></svg>
<div style="left:1723px;top:146px;width:16px;height:16px;border-radius:50%;background:#ff3535;border:1px solid #6a4040"></div>
<div style="left:1794px;top:171px;width:18px;height:17px;background:#444;border-radius:2px"></div>
<svg style="position:absolute;left:1798px;top:174px;" width="10" height="11" viewBox="0 0 10 11"><rect x="1" y="5" width="8" height="6" fill="#9a9a9a"/><path d="M3 5V3.5A2 2 0 0 1 7 3.5V5" stroke="#9a9a9a" stroke-width="1.3" fill="none"/></svg>
<div style="left:1817px;top:171px;width:78px;height:17px;background:#5a5a5a;border-radius:3px"></div>
<div style="left:1821px;top:168.0px;height:23.0px;line-height:23.0px;font-size:11.5px;color:#f4f4f4;white-space:nowrap;">CMJN</div>
<svg style="position:absolute;left:1880px;top:175px;" width="10" height="8" viewBox="0 0 10 8"><path d="M1.5 2L5 5.5L8.5 2" stroke="#e0e0e0" stroke-width="1.3" fill="none"/></svg>
<div style="left:1656px;top:194.5px;height:20px;line-height:20px;font-size:10px;color:#c8c8c8;white-space:nowrap;">C:</div>
<div style="left:1652px;top:218.5px;height:20px;line-height:20px;font-size:10px;color:#c8c8c8;white-space:nowrap;">M:</div>
<div style="left:1656px;top:242.5px;height:20px;line-height:20px;font-size:10px;color:#c8c8c8;white-space:nowrap;">J:</div>
<div style="left:1656px;top:266.5px;height:20px;line-height:20px;font-size:10px;color:#c8c8c8;white-space:nowrap;">N:</div>
<div style="left:1671px;top:198.5px;width:181px;height:10px;background:linear-gradient(90deg,#fff,#12b8ee);border-radius:5px"></div>
<div style="left:1669px;top:196.5px;width:14px;height:14px;border-radius:50%;border:2px solid #d8d8d8;background:rgba(255,255,255,0.25);box-shadow:0 0 0 1px rgba(0,0,0,0.25)"></div>
<div style="left:1672px;top:199.5px;width:8px;height:8px;border-radius:50%;border:1px solid #aaa"></div>
<div style="left:1856px;top:193.5px;width:39px;height:20px;background:#3a3a3a;border-radius:3px"></div>
<div style="left:1862px;top:192.0px;height:23.0px;line-height:23.0px;font-size:11.5px;color:#f4f4f4;white-space:nowrap;">0</div>
<div style="left:1671px;top:222.5px;width:181px;height:10px;background:linear-gradient(90deg,#fff,#e3148a);border-radius:5px"></div>
<div style="left:1669px;top:220.5px;width:14px;height:14px;border-radius:50%;border:2px solid #d8d8d8;background:rgba(255,255,255,0.25);box-shadow:0 0 0 1px rgba(0,0,0,0.25)"></div>
<div style="left:1672px;top:223.5px;width:8px;height:8px;border-radius:50%;border:1px solid #aaa"></div>
<div style="left:1856px;top:217.5px;width:39px;height:20px;background:#3a3a3a;border-radius:3px"></div>
<div style="left:1862px;top:216.0px;height:23.0px;line-height:23.0px;font-size:11.5px;color:#f4f4f4;white-space:nowrap;">0</div>
<div style="left:1671px;top:246.5px;width:181px;height:10px;background:linear-gradient(90deg,#fff,#f8ea00);border-radius:5px"></div>
<div style="left:1669px;top:244.5px;width:14px;height:14px;border-radius:50%;border:2px solid #d8d8d8;background:rgba(255,255,255,0.25);box-shadow:0 0 0 1px rgba(0,0,0,0.25)"></div>
<div style="left:1672px;top:247.5px;width:8px;height:8px;border-radius:50%;border:1px solid #aaa"></div>
<div style="left:1856px;top:241.5px;width:39px;height:20px;background:#3a3a3a;border-radius:3px"></div>
<div style="left:1862px;top:240.0px;height:23.0px;line-height:23.0px;font-size:11.5px;color:#f4f4f4;white-space:nowrap;">0</div>
<div style="left:1671px;top:270.5px;width:181px;height:10px;background:linear-gradient(90deg,#fff 8%,#3c3c3c);border-radius:5px"></div>
<div style="left:1686px;top:268.5px;width:14px;height:14px;border-radius:50%;border:2px solid #d8d8d8;background:rgba(255,255,255,0.25);box-shadow:0 0 0 1px rgba(0,0,0,0.25)"></div>
<div style="left:1689px;top:271.5px;width:8px;height:8px;border-radius:50%;border:1px solid #aaa"></div>
<div style="left:1856px;top:265.5px;width:39px;height:20px;background:#3a3a3a;border-radius:3px"></div>
<div style="left:1862px;top:264.0px;height:23.0px;line-height:23.0px;font-size:11.5px;color:#f4f4f4;white-space:nowrap;">10</div>
<div style="left:1656px;top:294px;width:239px;height:25px;background:linear-gradient(180deg,rgba(255,255,255,1) 0%,rgba(255,255,255,0) 50%,rgba(0,0,0,0) 50%,rgba(0,0,0,1) 100%),linear-gradient(90deg,#f00 0%,#ff0 17%,#0f0 33%,#0ff 50%,#00f 67%,#f0f 83%,#f00 100%);"></div>
<div style="left:1655px;top:321.5px;height:21.0px;line-height:21.0px;font-size:10.5px;color:#9a9a9a;white-space:nowrap;">Opacité</div>
<div style="left:1660px;top:341px;width:14px;height:14px;border-radius:50%;background:#bdbdbd"></div>
<div style="left:1681px;top:344px;width:147px;height:10px;background:#444;border-radius:5px"></div>
<div style="left:1815px;top:342px;width:13px;height:13px;border-radius:50%;border:1.5px solid #ccc"></div>
<div style="left:1833px;top:338px;width:43px;height:18px;background:#4a4a4a;border-radius:2px"></div>
<div style="left:1837px;top:337.5px;height:21.0px;line-height:21.0px;font-size:10.5px;color:#aaa;white-space:nowrap;">100 %</div>
<div style="left:1877px;top:338px;width:14px;height:18px;background:#5a5a5a;border-radius:2px"></div>
<svg style="position:absolute;left:1879px;top:344px;" width="10" height="8" viewBox="0 0 10 8"><path d="M1.5 2L5 5.5L8.5 2" stroke="#999" stroke-width="1.2" fill="none"/></svg>
<div style="left:1641px;top:366px;width:254px;height:29px;background:#404040;"></div>
<div style="left:1641px;top:367px;width:18px;height:28px;background:#3a3a3a;"></div>
<svg style="position:absolute;left:1646px;top:374px;" width="10" height="14" viewBox="0 0 10 14"><path d="M3 1V13M7 1V13" stroke="#888" stroke-width="1"/></svg>
<div style="left:1659px;top:367px;width:48px;height:28px;background:#4b4b4b;"></div>
<div style="left:1664px;top:369.5px;height:22px;line-height:22px;font-size:11px;color:#f0f0f0;white-space:nowrap;">Calques</div>
<div style="left:1712px;top:369.5px;height:22px;line-height:22px;font-size:11px;color:#d4d4d4;white-space:nowrap;">Caractère</div>
<div style="left:1768px;top:369.5px;height:22px;line-height:22px;font-size:11px;color:#d4d4d4;white-space:nowrap;">Par</div>
<div style="left:1793px;top:369.5px;height:22px;line-height:22px;font-size:11px;color:#d4d4d4;white-space:nowrap;">StT</div>
<svg style="position:absolute;left:1884px;top:375px;" width="12" height="11" viewBox="0 0 12 11"><path d="M0 1.5H12M0 5.5H12M0 9.5H12" stroke="#ddd" stroke-width="2"/></svg>
<div style="left:1649px;top:399.5px;height:21.0px;line-height:21.0px;font-size:10.5px;color:#dcdcdc;white-space:nowrap;">Opacité:</div>
<div style="left:1689px;top:399px;width:55px;height:20px;background:#3a3a3a;border-radius:3px"></div>
<div style="left:1694px;top:398.0px;height:22px;line-height:22px;font-size:11px;color:#f4f4f4;white-space:nowrap;">100 %</div>
<svg style="position:absolute;left:1728px;top:405.0px;" width="10" height="8" viewBox="0 0 10 8"><path d="M1.5 2L5 5.5L8.5 2" stroke="#e0e0e0" stroke-width="1.3" fill="none"/></svg>
<div style="left:1749px;top:400px;width:108px;height:19px;background:#5a5a5a;border-radius:3px"></div>
<div style="left:1754px;top:398.0px;height:23.0px;line-height:23.0px;font-size:11.5px;color:#ffffff;white-space:nowrap;">Normal</div>
<svg style="position:absolute;left:1841px;top:405.5px;" width="10" height="8" viewBox="0 0 10 8"><path d="M1.5 2L5 5.5L8.5 2" stroke="#e0e0e0" stroke-width="1.3" fill="none"/></svg>
<svg style="position:absolute;left:1861px;top:402px;" width="15" height="15" viewBox="0 0 15 15"><path d="M14.56 6.07 L14.56 8.93 L12.56 9.07 L12.19 9.97 L13.50 11.48 L11.48 13.50 L9.97 12.19 L9.07 12.56 L8.93 14.56 L6.07 14.56 L5.93 12.56 L5.03 12.19 L3.52 13.50 L1.50 11.48 L2.81 9.97 L2.44 9.07 L0.44 8.93 L0.44 6.07 L2.44 5.93 L2.81 5.03 L1.50 3.52 L3.52 1.50 L5.03 2.81 L5.93 2.44 L6.07 0.44 L8.93 0.44 L9.07 2.44 L9.97 2.81 L11.48 1.50 L13.50 3.52 L12.19 5.03 L12.56 5.93Z" fill="#c8c8c8"/><circle cx="7.5" cy="7.5" r="2.3" fill="#505050"/></svg>
<svg style="position:absolute;left:1885px;top:401px;" width="10" height="16" viewBox="0 0 10 16"><rect x="1" y="7" width="9" height="8" fill="#bdbdbd"/><path d="M3 7V4.5A2.5 2.5 0 0 1 8 4.5V7" stroke="#bdbdbd" stroke-width="1.5" fill="none"/></svg>
<div style="left:1641px;top:420px;width:254px;height:438px;background:#434343;"></div>
<div style="left:1641px;top:424px;width:247px;height:75px;background:#2c2c2c;"></div>
<div style="left:1642px;top:425px;width:245px;height:36px;background:#5e7fa6;"></div>
<div style="left:1642px;top:462px;width:245px;height:36px;background:#4c4c4c;"></div>
<div style="left:1658px;top:425px;width:1px;height:73px;background:#2c2c2c;"></div>
<div style="left:1695px;top:425px;width:1px;height:73px;background:#2c2c2c;"></div>
<div style="left:1660px;top:427px;width:33px;height:32px;background:#2f3338;"></div>
<svg style="position:absolute;left:1660px;top:427px;" width="33" height="32" viewBox="0 0 33 32"><g fill="none" stroke="#e8e8e8" stroke-width="1.1"><path d="M9 8 Q12 5 15 7 Q17 9 16 12 M9 8 Q8 11 9 13 Q12 12 15 11"/><path d="M16 12 Q18 14 20 13 Q23 13 25 16 Q27 13 29 10 Q27 14 25 18 Q26 22 25 26 L22 26 Q23 22 22 19 M12 14 Q12 18 13 21 Q12 24 13 26 L10 26 Q11 23 10 20 M13 21 Q17 22 20 21"/></g><path d="M9 12 Q14 13 20 15 Q22 20 20 22 Q15 22 12 20 Z" fill="#dcdcdc"/><path d="M9 9 L15 10 L14 12 Z" fill="#9aa0b8"/><path d="M6 27 H28" stroke="#888" stroke-width="0.8"/></svg>
<div style="left:1699px;top:432.0px;height:23.0px;line-height:23.0px;font-size:11.5px;color:#e8eef6;white-space:nowrap;">TREX-illustration.png</div>
<div style="left:1867px;top:439px;width:10px;height:10px;border-radius:50%;background:#c9ccd0"></div>
<svg style="position:absolute;left:1644px;top:436px;" width="12" height="14" viewBox="0 0 12 14"><rect x="1.5" y="1.5" width="9" height="11" fill="none" stroke="#aeb8c4" stroke-width="1"/><rect x="3.5" y="4" width="5" height="4" fill="#aeb8c4"/></svg>
<div style="left:1660px;top:464px;width:33px;height:32px;background:#3c3c3c;"></div>
<div style="left:1661px;top:470px;width:32px;height:20px;background:#fff;"></div>
<div style="left:1660px;top:464px;width:2px;height:32px;background:#6ee8c8;"></div>
<div style="left:1699px;top:469.5px;height:23.0px;line-height:23.0px;font-size:11.5px;color:#e4e4e4;white-space:nowrap;">Planche type A</div>
<div style="left:1867px;top:475px;width:10px;height:10px;border-radius:50%;background:#c9c9c9"></div>
<div style="left:1881px;top:463px;width:6px;height:35px;background:#c85050;"></div>
<svg style="position:absolute;left:1644px;top:467px;" width="12" height="26" viewBox="0 0 12 26"><rect x="1.5" y="1.5" width="9" height="11" fill="none" stroke="#bbb" stroke-width="1"/><path d="M3.5 5H8.5M3.5 7.5H8.5M3.5 10H8.5" stroke="#bbb" stroke-width="0.9"/><path d="M3 17L8 20.5L3 24" stroke="#bbb" stroke-width="1.1" fill="none"/></svg>
<div style="left:1641px;top:858px;width:254px;height:29px;background:#4a4a4a;"></div>
<div style="left:1647px;top:862px;width:21px;height:21px;background:#404040;border-radius:2px"></div>
<svg style="position:absolute;left:1648px;top:863px;" width="20" height="20" viewBox="0 0 20 20"><rect x="2.5" y="2.5" width="10" height="10" fill="none" stroke="#ccc" stroke-width="1.2"/><path d="M5 14.5H15V4.5M7 17H17V7" stroke="#aaa" stroke-width="1.1" fill="none"/></svg>
<svg style="position:absolute;left:1760px;top:864px;" width="16" height="16" viewBox="0 0 16 16"><rect x="1" y="2" width="14" height="12" rx="1.5" fill="#bbb"/><circle cx="8" cy="8" r="3.5" fill="#444"/></svg>
<svg style="position:absolute;left:1779px;top:864px;" width="17" height="17" viewBox="0 0 17 17"><circle cx="8.5" cy="8.5" r="7" fill="none" stroke="#ccc" stroke-width="1.2"/><path d="M13.5 3.5 A7 7 0 0 1 3.5 13.5 Z" fill="#ccc"/></svg>
<svg style="position:absolute;left:1800px;top:863px;" width="18" height="18" viewBox="0 0 18 18"><path d="M2 16H16" stroke="#ccc" stroke-width="1.3"/><path d="M3 14V3H8M3 8H7" stroke="#ccc" stroke-width="1.8" fill="none"/><path d="M9 4L15 14M15 4L9 14" stroke="#ccc" stroke-width="1.8"/><path d="M2 1.5H16" stroke="#ccc" stroke-width="1"/></svg>
<svg style="position:absolute;left:1864px;top:862px;" width="16" height="20" viewBox="0 0 16 20"><rect x="1.5" y="4" width="11" height="14" fill="none" stroke="#ccc" stroke-width="1.2"/><path d="M4 8H10M4 11H10M4 14H10" stroke="#ccc" stroke-width="1"/><path d="M12 1V6M9.5 3.5H14.5" stroke="#ccc" stroke-width="1.2"/></svg>
<svg style="position:absolute;left:1884px;top:863px;" width="11" height="19" viewBox="0 0 11 19"><rect x="1.5" y="4" width="10" height="14" fill="none" stroke="#ccc" stroke-width="1.2"/><path d="M0 3H12" stroke="#ccc" stroke-width="1.2"/><path d="M5 7V15M8 7V15" stroke="#ccc" stroke-width="1"/></svg>
<div style="left:1641px;top:888px;width:254px;height:29px;background:#404040;"></div>
<div style="left:1641px;top:889px;width:18px;height:28px;background:#3a3a3a;"></div>
<svg style="position:absolute;left:1646px;top:896px;" width="10" height="14" viewBox="0 0 10 14"><path d="M3 1V13M7 1V13" stroke="#888" stroke-width="1"/></svg>
<div style="left:1659px;top:889px;width:68px;height:28px;background:#4b4b4b;"></div>
<div style="left:1664px;top:891.5px;height:22px;line-height:22px;font-size:11px;color:#f0f0f0;white-space:nowrap;">Transformer</div>
<div style="left:1733px;top:891.5px;height:22px;line-height:22px;font-size:11px;color:#d4d4d4;white-space:nowrap;">Navigateur</div>
<div style="left:1795px;top:891.5px;height:22px;line-height:22px;font-size:11px;color:#d4d4d4;white-space:nowrap;">Historique</div>
<svg style="position:absolute;left:1884px;top:897px;" width="12" height="11" viewBox="0 0 12 11"><path d="M0 1.5H12M0 5.5H12M0 9.5H12" stroke="#ddd" stroke-width="2"/></svg>
<div style="left:1641px;top:917px;width:254px;height:130px;background:#4e4e4e;"></div>
<svg style="position:absolute;left:1656px;top:948px;" width="40" height="40" viewBox="0 0 40 40"><rect x="5" y="5" width="30" height="30" fill="#8e8e8e"/><rect x="2" y="17" width="6" height="6" fill="#d0d0d0"/><rect x="2" y="32" width="6" height="6" fill="#d0d0d0"/><rect x="17" y="2" width="6" height="6" fill="#d0d0d0"/><rect x="17" y="17" width="6" height="6" fill="#d0d0d0"/><rect x="17" y="32" width="6" height="6" fill="#d0d0d0"/><rect x="32" y="2" width="6" height="6" fill="#d0d0d0"/><rect x="32" y="17" width="6" height="6" fill="#d0d0d0"/><rect x="32" y="32" width="6" height="6" fill="#d0d0d0"/><rect x="0" y="0" width="10" height="10" fill="#fff"/></svg>
<div style="left:1711px;top:927.5px;height:22px;line-height:22px;font-size:11px;color:#c8c8c8;white-space:nowrap;">X:</div>
<div style="left:1724px;top:929px;width:65px;height:19px;background:#3a3a3a;border-radius:3px"></div>
<div style="left:1730px;top:927.0px;height:23.0px;line-height:23.0px;font-size:11.5px;color:#f4f4f4;white-space:nowrap;">158 mm</div>
<div style="left:1801px;top:927.5px;height:22px;line-height:22px;font-size:11px;color:#c8c8c8;white-space:nowrap;">L:</div>
<div style="left:1814px;top:929px;width:65px;height:19px;background:#3a3a3a;border-radius:3px"></div>
<div style="left:1820px;top:927.0px;height:23.0px;line-height:23.0px;font-size:11.5px;color:#f4f4f4;white-space:nowrap;">113,3 mm</div>
<div style="left:1711px;top:951.5px;height:22px;line-height:22px;font-size:11px;color:#c8c8c8;white-space:nowrap;">Y:</div>
<div style="left:1724px;top:953px;width:65px;height:19px;background:#3a3a3a;border-radius:3px"></div>
<div style="left:1730px;top:951.0px;height:23.0px;line-height:23.0px;font-size:11.5px;color:#f4f4f4;white-space:nowrap;">10 mm</div>
<div style="left:1800px;top:951.5px;height:22px;line-height:22px;font-size:11px;color:#c8c8c8;white-space:nowrap;">H:</div>
<div style="left:1814px;top:953px;width:65px;height:19px;background:#3a3a3a;border-radius:3px"></div>
<div style="left:1820px;top:951.0px;height:23.0px;line-height:23.0px;font-size:11.5px;color:#f4f4f4;white-space:nowrap;">113,3 mm</div>
<div style="left:1711px;top:981.5px;height:22px;line-height:22px;font-size:11px;color:#c8c8c8;white-space:nowrap;">R:</div>
<div style="left:1724px;top:983px;width:65px;height:19px;background:#3a3a3a;border-radius:3px"></div>
<div style="left:1730px;top:981.0px;height:23.0px;line-height:23.0px;font-size:11.5px;color:#f4f4f4;white-space:nowrap;">0 °</div>
<svg style="position:absolute;left:1775px;top:989px;" width="10" height="8" viewBox="0 0 10 8"><path d="M1.5 2L5 5.5L8.5 2" stroke="#e0e0e0" stroke-width="1.3" fill="none"/></svg>
<div style="left:1801px;top:981.5px;height:22px;line-height:22px;font-size:11px;color:#c8c8c8;white-space:nowrap;">S:</div>
<div style="left:1814px;top:983px;width:65px;height:19px;background:#3a3a3a;border-radius:3px"></div>
<div style="left:1820px;top:981.0px;height:23.0px;line-height:23.0px;font-size:11.5px;color:#f4f4f4;white-space:nowrap;">0 °</div>
<svg style="position:absolute;left:1865px;top:989px;" width="10" height="8" viewBox="0 0 10 8"><path d="M1.5 2L5 5.5L8.5 2" stroke="#e0e0e0" stroke-width="1.3" fill="none"/></svg>
<div style="left:1834px;top:1011px;width:45px;height:26px;background:#5a5a5a;border-radius:3px"></div>
<div style="left:1863px;top:1011px;width:1px;height:26px;background:#4a4a4a;"></div>
<svg style="position:absolute;left:1840px;top:1016px;" width="20" height="16" viewBox="0 0 20 16"><rect x="2" y="5" width="9" height="9" rx="1.5" fill="#777"/><path d="M6 3V1.5H16V11H13" stroke="#777" stroke-width="1.2" stroke-dasharray="2 1.5" fill="none"/></svg>
<svg style="position:absolute;left:1866px;top:1020px;" width="10" height="8" viewBox="0 0 10 8"><path d="M1.5 2L5 5.5L8.5 2" stroke="#ccc" stroke-width="1.2" fill="none"/></svg>
<svg style="position:absolute;left:1887px;top:933px;" width="8" height="34" viewBox="0 0 8 34"><path d="M8 1.5H5.5V14M8 32.5H5.5V20" stroke="#aaa" stroke-width="1.2" fill="none"/></svg>
<div style="left:0px;top:1047px;width:1895px;height:19px;background:#4c4c4c;"></div>
<svg style="position:absolute;left:0px;top:1053px;" width="240" height="13" viewBox="0 0 240 13"><path d="M1 1V12 M7 1V12" stroke="#eee" stroke-width="0"/>
      <path d="M0 6.5L4 1V12Z" fill="#f0f0f0"/>
      <path d="M13 6.5L20 1V12Z" fill="#f0f0f0"/>
      <path d="M109 1L116 6.5L109 12Z" fill="#f0f0f0"/>
      <path d="M127 1L134 6.5L127 12Z" fill="#f0f0f0"/><rect x="135" y="1" width="1.4" height="11" fill="#f0f0f0"/>
      <rect x="146.5" y="1.5" width="9" height="11" fill="none" stroke="#eee" stroke-width="1.2"/><path d="M148.5 4.5H153.5M148.5 7H153.5M148.5 9.5H153.5" stroke="#eee" stroke-width="1"/><path d="M157.5 3V12" stroke="#eee" stroke-width="1"/>
      <path d="M167 8 Q173 3 179 8 Q173 13 167 8Z" fill="none" stroke="#eee" stroke-width="1.2"/><circle cx="173" cy="8" r="1.6" fill="#eee"/><path d="M167 4 L170 2" stroke="#eee" stroke-width="1"/>
      <circle cx="197" cy="6" r="5.5" fill="#3fc46f"/><path d="M194.5 6L196.5 8L200 4" stroke="#fff" stroke-width="1.3" fill="none"/><path d="M202 1.5H205V13" stroke="#ccc" stroke-width="1" fill="none"/></svg>
<div style="left:41px;top:1050.4px;height:21.2px;line-height:21.2px;font-size:10.6px;color:#eeeeee;white-space:nowrap;">2,3 sur 20</div>
<div style="left:226px;top:1049.7px;height:23.6px;line-height:23.6px;font-size:11.8px;color:#dcdcdc;white-space:nowrap;">"TREX-illustration.png" sélectionné(s). <b>Glisser</b> pour déplacer la sélection. <b>Cliquer</b> sur un autre objet pour le sélectionner. <b>Cliquer</b> sur une zone vide pour annuler la sélection. <b>Renvoyer</b> pour saisir/dupliquer des valeurs.</div>
</body></html>
